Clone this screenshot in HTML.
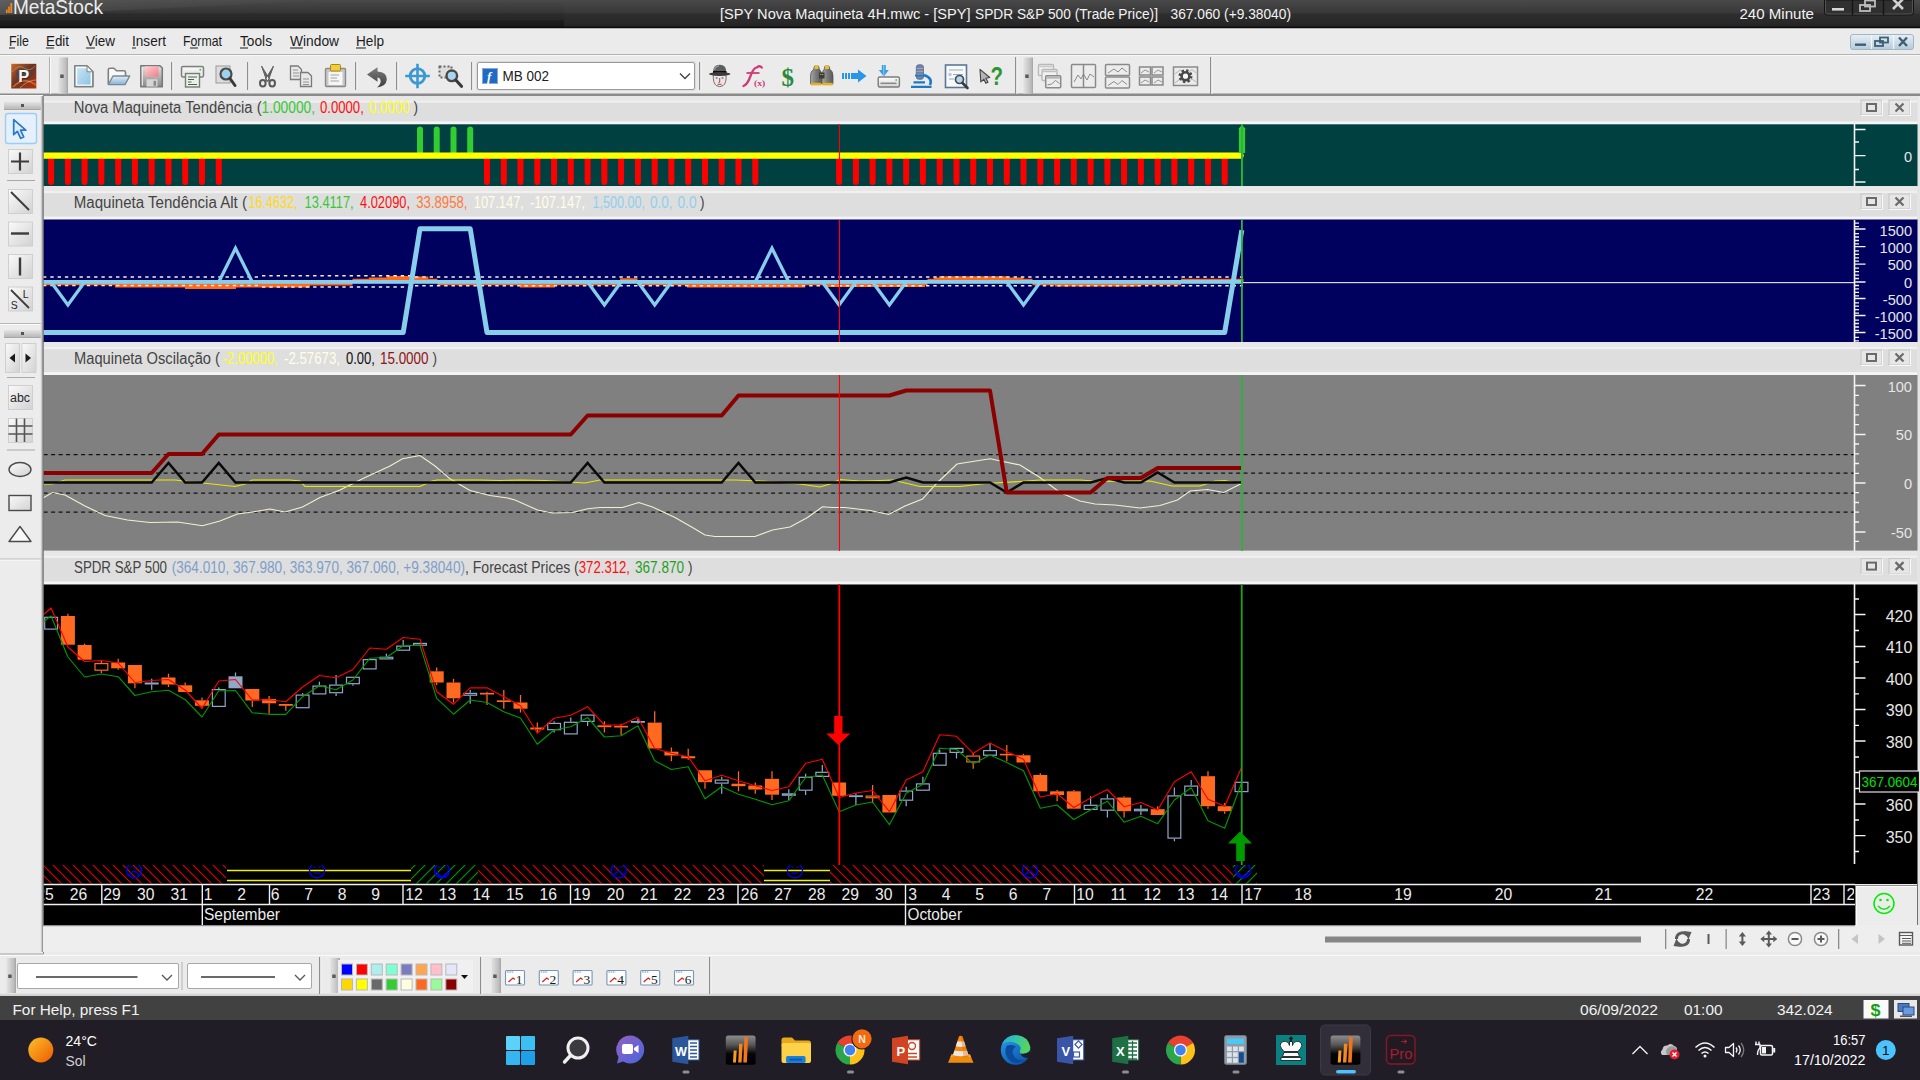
<!DOCTYPE html>
<html lang="en"><head><meta charset="utf-8"><title>MetaStock</title>
<style>html,body{margin:0;padding:0;background:#ebebeb;overflow:hidden}body{width:1920px;height:1080px;position:relative;font-family:"Liberation Sans", sans-serif}svg{position:absolute;left:0;top:0;display:block;font-family:"Liberation Sans", sans-serif}svg text{white-space:pre}</style></head><body>
<svg width="1920" height="1080" viewBox="0 0 1920 1080">
<defs>
<linearGradient id="gTitle" x1="0" y1="0" x2="0" y2="1"><stop offset="0" stop-color="#494949"/><stop offset="0.45" stop-color="#383838"/><stop offset="0.5" stop-color="#2e2e2e"/><stop offset="0.9" stop-color="#262626"/><stop offset="1" stop-color="#101010"/></linearGradient>
<linearGradient id="gTitleHi" x1="0" y1="0" x2="1" y2="0"><stop offset="0" stop-color="#909090" stop-opacity="0.30"/><stop offset="0.35" stop-color="#808080" stop-opacity="0.16"/><stop offset="1" stop-color="#808080" stop-opacity="0"/></linearGradient>
<linearGradient id="gTitleL" x1="0" y1="0" x2="0" y2="1"><stop offset="0" stop-color="#000" stop-opacity="0"/><stop offset="0.7" stop-color="#000" stop-opacity="0.08"/><stop offset="0.75" stop-color="#000" stop-opacity="0.3"/><stop offset="1" stop-color="#000" stop-opacity="0.3"/></linearGradient>
<linearGradient id="gGrip" x1="0" y1="0" x2="1" y2="0"><stop offset="0" stop-color="#e4e4e4"/><stop offset="1" stop-color="#b8b8b8"/></linearGradient>
<linearGradient id="gGripH" x1="0" y1="0" x2="0" y2="1"><stop offset="0" stop-color="#e4e4e4"/><stop offset="1" stop-color="#b8b8b8"/></linearGradient>
<linearGradient id="gBtn" x1="0" y1="0" x2="1" y2="1"><stop offset="0" stop-color="#fafafa"/><stop offset="1" stop-color="#d2d2d2"/></linearGradient>
<linearGradient id="gMdi" x1="0" y1="0" x2="0" y2="1"><stop offset="0" stop-color="#e6eff5"/><stop offset="0.5" stop-color="#cfdde8"/><stop offset="1" stop-color="#b4cbda"/></linearGradient>
<linearGradient id="gSun" x1="0" y1="0" x2="1" y2="1"><stop offset="0" stop-color="#fbc02a"/><stop offset="1" stop-color="#ee5a00"/></linearGradient>
<pattern id="hRed" width="10" height="10" patternUnits="userSpaceOnUse" patternTransform="translate(3 865)"><path d="M-2 -2L12 12M-12 -2L2 12M8 -2L22 12" stroke="#e80000" stroke-width="1.1"/></pattern>
<pattern id="hGreen" width="10" height="10" patternUnits="userSpaceOnUse" patternTransform="translate(5.100 865)"><path d="M-2 12L12 -2M-12 12L2 -2M8 12L22 -2" stroke="#00a000" stroke-width="1.1"/></pattern>
</defs>
<rect x="0" y="0" width="1920" height="1080" fill="#ebebeb"/>
<rect x="0" y="0" width="1920" height="28" fill="url(#gTitle)"/>
<rect x="0" y="0" width="564" height="28" fill="url(#gTitleL)"/>
<path d="M0 0H330L150 9Q60 13 0 15Z" fill="url(#gTitleHi)"/>
<rect x="0" y="27" width="1920" height="1.5" fill="#0a0a0a"/>
<path d="M6 13V9.5H7.6V13ZM8.2 13V6.5H9.8V13ZM10.4 13V3H12.2V13Z" fill="#f28a1c"/>
<text x="13" y="14" font-size="21" fill="#ececec" textLength="90" lengthAdjust="spacingAndGlyphs">MetaStock</text>
<text x="720" y="18.5" font-size="15.5" fill="#f2f2f2" textLength="250.6" lengthAdjust="spacingAndGlyphs">[SPY Nova Maquineta 4H.mwc - [SPY]</text>
<text x="975" y="18.5" font-size="15.5" fill="#f2f2f2" textLength="183" lengthAdjust="spacingAndGlyphs">SPDR S&amp;P 500 (Trade Price)]</text>
<text x="1170.5" y="18.5" font-size="15.5" fill="#f2f2f2" textLength="120.5" lengthAdjust="spacingAndGlyphs">367.060 (+9.38040)</text>
<text x="1739.5" y="18.5" font-size="15.5" fill="#f2f2f2" textLength="74.5" lengthAdjust="spacingAndGlyphs">240 Minute</text>
<path d="M1824.5 0V12Q1824.5 15 1828 15H1910Q1913.5 15 1913.5 12V0Z" fill="#303030" stroke="#141414" stroke-width="1"/>
<path d="M1825.5 0V12Q1825.5 14 1828 14H1910Q1912.5 14 1912.5 12V0" fill="none" stroke="#5a5a5a" stroke-width="0.8"/>
<path d="M1852.5 0V15M1883.5 0V15" stroke="#141414" stroke-width="1.4"/>
<rect x="1832" y="8" width="12" height="2.6" fill="#d8d8d8"/>
<rect x="1860" y="5" width="10" height="6" fill="none" stroke="#bdbdbd" stroke-width="1.8"/>
<rect x="1865" y="0.5" width="10" height="6" fill="none" stroke="#bdbdbd" stroke-width="1.8"/>
<path d="M1893 -1L1903 9M1903 -1L1893 9" stroke="#d0d0d0" stroke-width="2.6"/>
<rect x="0" y="28.5" width="1920" height="26" fill="#ebebeb"/>
<rect x="0" y="54" width="1920" height="1" fill="#b4b4b4"/>
<rect x="0" y="55" width="1920" height="1" fill="#f8f8f8"/>
<text x="9" y="46" font-size="15" fill="#1c1c1c" textLength="20" lengthAdjust="spacingAndGlyphs">File</text>
<rect x="9" y="47.5" width="6" height="1" fill="#1c1c1c"/>
<text x="46" y="46" font-size="15" fill="#1c1c1c" textLength="23" lengthAdjust="spacingAndGlyphs">Edit</text>
<rect x="46" y="47.5" width="8" height="1" fill="#1c1c1c"/>
<text x="86" y="46" font-size="15" fill="#1c1c1c" textLength="29" lengthAdjust="spacingAndGlyphs">View</text>
<rect x="86" y="47.5" width="9" height="1" fill="#1c1c1c"/>
<text x="132" y="46" font-size="15" fill="#1c1c1c" textLength="34" lengthAdjust="spacingAndGlyphs">Insert</text>
<rect x="132" y="47.5" width="4" height="1" fill="#1c1c1c"/>
<text x="183" y="46" font-size="15" fill="#1c1c1c" textLength="39" lengthAdjust="spacingAndGlyphs">Format</text>
<rect x="190" y="47.5" width="8" height="1" fill="#1c1c1c"/>
<text x="240" y="46" font-size="15" fill="#1c1c1c" textLength="32" lengthAdjust="spacingAndGlyphs">Tools</text>
<rect x="240" y="47.5" width="8" height="1" fill="#1c1c1c"/>
<text x="290" y="46" font-size="15" fill="#1c1c1c" textLength="49" lengthAdjust="spacingAndGlyphs">Window</text>
<rect x="290" y="47.5" width="13" height="1" fill="#1c1c1c"/>
<text x="356" y="46" font-size="15" fill="#1c1c1c" textLength="28" lengthAdjust="spacingAndGlyphs">Help</text>
<rect x="356" y="47.5" width="10" height="1" fill="#1c1c1c"/>
<rect x="1850.5" y="34.5" width="63" height="15" rx="2.5" fill="url(#gMdi)" stroke="#9fb7c6" stroke-width="1"/>
<path d="M1871.5 35V49M1893.5 35V49" stroke="#f2f7fa" stroke-width="1.2"/>
<rect x="1855" y="43.5" width="11" height="2.4" fill="#3e5f73"/>
<rect x="1875" y="41" width="8" height="5" fill="none" stroke="#3e5f73" stroke-width="1.8"/>
<rect x="1880" y="37.5" width="8" height="5" fill="none" stroke="#3e5f73" stroke-width="1.8"/>
<path d="M1899 37.5L1907 46M1907 37.5L1899 46" stroke="#3e5f73" stroke-width="2.4"/>
<rect x="0" y="56" width="1920" height="38" fill="#ebebeb"/>
<rect x="0" y="93.5" width="1920" height="1.5" fill="#8a8a8a"/>
<rect x="0" y="95" width="43" height="1" fill="#f6f6f6"/>
<linearGradient id="gP" x1="0" y1="0" x2="1" y2="1"><stop offset="0" stop-color="#c8682a"/><stop offset="0.45" stop-color="#6a3424"/><stop offset="1" stop-color="#b03410"/></linearGradient>
<rect x="11.300" y="63.800" width="25" height="24.700" fill="url(#gP)"/>
<ellipse cx="25" cy="73" rx="9.500" ry="5.500" fill="#4c4440" opacity="0.650"/><path d="M12 72Q18 64 24 68T35 66" stroke="#d8a070" stroke-width="1" fill="none" opacity="0.550"/><path d="M13 87Q24 76 36 85" stroke="#f07a2a" stroke-width="1.600" fill="none" opacity="0.700"/><path d="M20 88Q28 80 36 80" stroke="#e8d0c0" stroke-width="0.800" fill="none" opacity="0.600"/>
<text x="19" y="83" font-size="16.5" fill="#2a2220" font-weight="bold" opacity="0.6">P</text>
<text x="18.3" y="82.3" font-size="16.5" fill="#f6f6f6" font-weight="bold">P</text>
<rect x="49" y="57" width="1" height="37" fill="#b0b0b0"/><rect x="50" y="57" width="1" height="37" fill="#fafafa"/>
<rect x="58.3" y="57.5" width="8.400" height="36.0" fill="url(#gGrip)"/>
<rect x="66.7" y="57.5" width="1" height="36.0" fill="#8e8e8e"/>
<rect x="60.2" y="74.5" width="3.500" height="3.500" fill="#5a5a5a"/>
<linearGradient id="gDoc" x1="0" y1="0" x2="1" y2="1"><stop offset="0" stop-color="#cfe8f6"/><stop offset="1" stop-color="#86c0e2"/></linearGradient>
<path d="M74.800 65.800H87L93 71.800V86.800H74.800Z" fill="url(#gDoc)" stroke="#808080" stroke-width="1.600" stroke-linejoin="round"/><path d="M76.500 67.500H86.300L91.300 72.500V85.100H76.500Z" fill="none" stroke="#f6fafc" stroke-width="1.400"/><path d="M87 65.800V71.800H93Z" fill="#f4f4f4" stroke="#808080" stroke-width="1" stroke-linejoin="round"/>
<linearGradient id="gFold" x1="0" y1="0" x2="0" y2="1"><stop offset="0" stop-color="#e4eef6"/><stop offset="1" stop-color="#86b2d8"/></linearGradient>
<path d="M108.300 84.300V69.800Q108.300 68.300 110 68.300H114L116.500 70.800H124Q125.500 70.800 125.500 72.300V77" fill="#f8f8f8" stroke="#808080" stroke-width="1.600" stroke-linejoin="round"/><path d="M108.300 84.600L113 76H129.700L125 84.600Z" fill="url(#gFold)" stroke="#7a8894" stroke-width="1.400" stroke-linejoin="round"/>
<linearGradient id="gSave" x1="0" y1="0" x2="0" y2="1"><stop offset="0" stop-color="#e2e2e2"/><stop offset="0.5" stop-color="#b4b4b4"/><stop offset="1" stop-color="#8a8a8a"/></linearGradient><linearGradient id="gPink" x1="0" y1="0" x2="1" y2="1"><stop offset="0" stop-color="#fbd0d4"/><stop offset="1" stop-color="#f08088"/></linearGradient>
<path d="M140.800 65.800H160L162.300 68V86.800H140.800Z" fill="url(#gSave)" stroke="#787878" stroke-width="1.500" stroke-linejoin="round"/><rect x="145" y="66.300" width="13.500" height="10.200" fill="url(#gPink)"/><rect x="146.500" y="79.300" width="11" height="7.300" fill="#d6d6d6"/><rect x="153.500" y="80.800" width="2.600" height="5" fill="#8a8a8a"/><path d="M142.300 67.300V85.500" stroke="#f4f4f4" stroke-width="1"/>
<rect x="171" y="62" width="1.400" height="28" fill="#8e8e8e"/>
<rect x="172.4" y="62" width="1" height="28" fill="#f8f8f8"/>
<rect x="181.500" y="66.500" width="22" height="10.500" rx="1.500" fill="#ececec" stroke="#808080" stroke-width="1.500"/><path d="M183.500 69H201.500" stroke="#fafafa" stroke-width="1.500"/><rect x="185.500" y="73.500" width="14" height="13.500" fill="#e6f4e6" stroke="#7a7a7a" stroke-width="1.400"/><path d="M188 77H197M188 79.500H194M188 82H191.500M188 84.500H197" stroke="#5a5a5a" stroke-width="1"/><circle cx="200.300" cy="69.800" r="1" fill="#4c4"/>
<rect x="216" y="66" width="14" height="17" fill="#dcdcdc" stroke="#9a9a9a" stroke-width="1"/><circle cx="226" cy="74" r="5.5" fill="#9ed0f0" stroke="#4a4a4a" stroke-width="2.2"/><path d="M230 78.5L235 85.5" stroke="#3a3a3a" stroke-width="3" stroke-linecap="round"/>
<rect x="247" y="62" width="1.400" height="28" fill="#8e8e8e"/>
<rect x="248.4" y="62" width="1" height="28" fill="#f8f8f8"/>
<path d="M261.500 66L269.500 79L267 81.500ZM273.500 66L265.500 79L268 81.500Z" fill="#606060" stroke="#606060" stroke-width="1" stroke-linejoin="round"/><ellipse cx="262.800" cy="83.200" rx="2.800" ry="3.200" fill="none" stroke="#585858" stroke-width="2"/><ellipse cx="272.200" cy="83.200" rx="2.800" ry="3.200" fill="none" stroke="#585858" stroke-width="2"/>
<path d="M290.5 66H298L301.5 69.5V79.5H290.5Z" fill="#e8e8e8" stroke="#7a7a7a" stroke-width="1.3"/><path d="M300.5 72.5H308L311.5 76V86.5H300.5Z" fill="#e8e8e8" stroke="#7a7a7a" stroke-width="1.3"/><path d="M293 70H298M293 73H299M293 76H299M303 79H309M303 82H309M303 84.5H309" stroke="#8a8a8a" stroke-width="0.9"/>
<rect x="325.5" y="68.5" width="20" height="18" rx="1" fill="#c8c8c8" stroke="#8a8a8a" stroke-width="1.4"/><rect x="328.5" y="72" width="14" height="13" fill="#f6f6f6"/><rect x="330.5" y="64.5" width="10" height="6.5" rx="1" fill="#f2cc3a" stroke="#a88a10" stroke-width="1"/><path d="M330.5 75H339M330.5 78H337M330.5 81H339" stroke="#9a9a9a" stroke-width="0.9"/>
<rect x="355" y="62" width="1.400" height="28" fill="#8e8e8e"/>
<rect x="356.4" y="62" width="1" height="28" fill="#f8f8f8"/>
<linearGradient id="gUndo" x1="0" y1="0" x2="0" y2="1"><stop offset="0" stop-color="#7c7c7c"/><stop offset="1" stop-color="#3e3e3e"/></linearGradient>
<path d="M367 74.500L377.500 67.300V71.500Q387 72 386.800 79.500Q386.300 86.300 377 87.600Q381.200 84.300 380.600 80.600Q380 77.600 377.500 77.500V81.700Z" fill="url(#gUndo)"/>
<rect x="396" y="62" width="1.400" height="28" fill="#8e8e8e"/>
<rect x="397.4" y="62" width="1" height="28" fill="#f8f8f8"/>
<circle cx="417.500" cy="76" r="7.300" fill="#f2e8ee" stroke="#3a9ad0" stroke-width="2.800"/><path d="M417.500 63.800V88.300M405.200 76H429.800" stroke="#3a9ad0" stroke-width="2.600"/>
<rect x="439.500" y="66.400" width="12" height="11" fill="#dedede" stroke="#666" stroke-width="2" stroke-dasharray="2 2"/><circle cx="451.800" cy="75.800" r="5.300" fill="#a8d4f0" stroke="#484848" stroke-width="2.400"/><path d="M455.800 80L461.500 86.300" stroke="#3a3a3a" stroke-width="3.200" stroke-linecap="round"/>
<rect x="471" y="62" width="1.400" height="28" fill="#8e8e8e"/>
<rect x="472.4" y="62" width="1" height="28" fill="#f8f8f8"/>
<rect x="477.5" y="62.5" width="217" height="27" rx="1.5" fill="#ffffff" stroke="#9a9a9a" stroke-width="1"/>
<rect x="476.5" y="61.5" width="219" height="29" rx="2" fill="none" stroke="#dcdcdc" stroke-width="1"/>
<rect x="482.5" y="68.5" width="15" height="15" fill="#1e6ac8" stroke="#8aa8d0" stroke-width="1"/>
<text x="487" y="81" font-size="13" fill="#ffffff" font-style="italic" font-weight="bold" font-family="Liberation Serif, serif">f</text>
<text x="502.5" y="81" font-size="15" fill="#202020" textLength="46.5" lengthAdjust="spacingAndGlyphs">MB 002</text>
<path d="M680 73.5L685 78.5L690 73.5" stroke="#444" stroke-width="1.4" fill="none"/>
<rect x="699" y="62" width="1.400" height="28" fill="#8e8e8e"/>
<rect x="700.4" y="62" width="1" height="28" fill="#f8f8f8"/>
<path d="M713.300 75Q712.800 83 716.300 85.600Q719.700 87.700 723.100 85.600Q726.600 83 726.100 75Z" fill="#f6e0e0" stroke="#6e6262" stroke-width="0.900"/><circle cx="716.700" cy="78" r="1.100" fill="#5a9ad8"/><circle cx="722.500" cy="78" r="1.100" fill="#5a9ad8"/><path d="M719.700 78V82.300H718.500M717.500 84.300H721.500" stroke="#4a4040" stroke-width="0.800" fill="none"/><path d="M713 73Q712.800 64.800 719.700 64.800Q726.600 64.800 726.400 73Z" fill="#5e5e5e"/><path d="M714.500 70Q715 66.300 719 65.800" stroke="#9a9a9a" stroke-width="1.200" fill="none"/><rect x="713" y="71" width="13.400" height="2" fill="#0e0e0e"/><ellipse cx="719.700" cy="74" rx="10.700" ry="1.900" fill="#3c3c3c"/>
<path d="M743.500 86Q747.500 84.500 750.500 76T757 67.300Q759.800 65.200 761.800 67.600" stroke="#d03a78" stroke-width="2.300" fill="none" stroke-linecap="round"/><path d="M746.500 73H759.500" stroke="#d03a78" stroke-width="1.800"/>
<text x="754" y="85.5" font-size="9" fill="#d03a78" textLength="11.3" lengthAdjust="spacingAndGlyphs" font-weight="bold" font-family="Liberation Serif, serif">(x)</text>
<text x="781.5" y="86.3" font-size="26" fill="#2a8a3a" textLength="12.5" lengthAdjust="spacingAndGlyphs" font-weight="bold" font-family="Liberation Serif, serif">$</text>
<linearGradient id="gBin" x1="0" y1="0" x2="1" y2="0"><stop offset="0" stop-color="#a8a8a8"/><stop offset="0.5" stop-color="#7a7a7a"/><stop offset="1" stop-color="#5a5a5a"/></linearGradient>
<path d="M810.500 84V76Q810.500 71 813.500 69.500L814.500 66H818.500L819.500 69.500Q821.500 71 821.500 76V84Z" fill="url(#gBin)" stroke="#4a4a4a" stroke-width="0.700"/><path d="M833 84V76Q833 71 830 69.500L829 66H825L824 69.500Q822 71 822 76V84Z" fill="url(#gBin)" stroke="#4a4a4a" stroke-width="0.700"/><rect x="819" y="72.500" width="5.500" height="6" fill="#3c3c3c"/><rect x="820.300" y="74" width="1" height="1" fill="#e8c020"/><rect x="822.300" y="74" width="1" height="1" fill="#e8c020"/><rect x="814.500" y="65.500" width="4" height="3.500" fill="#e6c228"/><rect x="825" y="65.500" width="4" height="3.500" fill="#e6c228"/><rect x="810.800" y="82.800" width="10.400" height="2.600" fill="#e0b420"/><rect x="822.300" y="82.800" width="10.400" height="2.600" fill="#e0b420"/>
<path d="M842 73H844V79H842ZM845 73H847V79H845ZM848 73H850V79H848ZM851 73H858V69.5L866.5 76L858 82.5V79H851Z" fill="#2a96e8"/>
<linearGradient id="gTray" x1="0" y1="0" x2="0" y2="1"><stop offset="0" stop-color="#ffffff"/><stop offset="1" stop-color="#d4d4d4"/></linearGradient>
<rect x="878.200" y="77" width="21.200" height="10" rx="1.500" fill="url(#gTray)" stroke="#7c7c7c" stroke-width="1.400"/><path d="M880.500 83.300H896.500" stroke="#8a8a8a" stroke-width="1.600"/><circle cx="896.200" cy="80" r="1" fill="#5c5"/><path d="M881.800 65H885.800V70H888.800L883.800 76.500L878.800 70H881.800Z" fill="#3a9ee0"/><path d="M883.800 65V76" stroke="#8accf4" stroke-width="1"/>
<rect x="916.300" y="64.800" width="7.200" height="14.500" rx="2.500" fill="#7484a4" stroke="#566484" stroke-width="0.800"/><path d="M916.500 68.500H923.300M916.500 71.500H923.300M916.500 74.500H923.300" stroke="#9aa8c4" stroke-width="0.900"/><path d="M915 75.500H924.500" stroke="#1e78c8" stroke-width="1.800"/><path d="M924 75Q933 78 930 85" stroke="#1e78c8" stroke-width="2.600" fill="none"/><path d="M911 86.800H931.500M913.500 82.400H925" stroke="#1e78c8" stroke-width="2.200"/>
<rect x="945.5" y="65" width="21" height="22.5" fill="#f6f8fa" stroke="#5a7896" stroke-width="1.6"/><path d="M949 70H963M953 74.5H963M949 79H954" stroke="#9ab" stroke-width="1"/><rect x="948.5" y="73" width="3" height="3" fill="#b8c8d8"/><circle cx="959.5" cy="79.5" r="4" fill="#aed8f4" stroke="#4a4a4a" stroke-width="1.7"/><path d="M962.5 83L967.5 88" stroke="#3a3a3a" stroke-width="2.6" stroke-linecap="round"/>
<path d="M980 69.300L989.800 77.500L985.800 78.300L988 82.300L985.800 83.300L983.800 79.300L980.800 81.800Z" fill="#b4b4b4" stroke="#444" stroke-width="1.100" stroke-linejoin="round"/>
<text x="990.5" y="85.3" font-size="25" fill="#2e962e" textLength="12.5" lengthAdjust="spacingAndGlyphs" font-weight="bold">?</text>
<rect x="1015" y="57" width="1.400" height="37" fill="#8e8e8e"/>
<rect x="1016.4" y="57" width="1" height="37" fill="#f8f8f8"/>
<rect x="1023.3" y="57.5" width="8.400" height="36.0" fill="url(#gGrip)"/>
<rect x="1031.7" y="57.5" width="1" height="36.0" fill="#8e8e8e"/>
<rect x="1025.2" y="74.5" width="3.500" height="3.500" fill="#5a5a5a"/>
<rect x="1038.500" y="64.500" width="15" height="11" rx="1" stroke="#b8b8b8" stroke-width="1.400" fill="#f2f2f2"/><path d="M1039.500 66.500h13" stroke="#c8c8c8" stroke-width="1.500"/><rect x="1042" y="69.500" width="15" height="11" rx="1" stroke="#b8b8b8" stroke-width="1.400" fill="#f2f2f2"/><path d="M1043 71.500h13" stroke="#c0c0c0" stroke-width="1.500"/><rect x="1045.700" y="75.800" width="15" height="12" rx="1" stroke="#8a8a8a" stroke-width="1.5" fill="#ececec"/><path d="M1046.700 77.800h13" stroke="#b0b0b0" stroke-width="1.500"/><path d="M1047.500 85L1051.500 84L1055.500 80.500L1059.500 83.500" stroke="#8a8a8a" fill="none" stroke-width="1"/>
<rect x="1071.5" y="64.5" width="24" height="23" rx="1" stroke="#8a8a8a" stroke-width="1.5" fill="#ececec"/><path d="M1083.5 65V87" stroke="#8a8a8a" stroke-width="1.5"/><path d="M1074 82L1078 75L1081 79L1083.500 74L1087 80L1090 74L1094 77" stroke="#8a8a8a" fill="none" stroke-width="1"/>
<rect x="1105.500" y="64.5" width="24" height="11" rx="1" stroke="#8a8a8a" stroke-width="1.5" fill="#ececec"/><rect x="1105.5" y="77" width="24" height="11" rx="1" stroke="#8a8a8a" stroke-width="1.5" fill="#ececec"/><path d="M1108 73L1114 69L1118 72L1122 68L1127 72M1108 85.5L1114 81.5L1118 84.5L1122 80.5L1127 84.5" stroke="#8a8a8a" fill="none" stroke-width="1"/>
<rect x="1139.500" y="67" width="11" height="8" stroke="#8a8a8a" stroke-width="1.5" fill="#ececec"/><rect x="1152" y="67" width="11" height="8" stroke="#8a8a8a" stroke-width="1.5" fill="#ececec"/><rect x="1139.5" y="77" width="11" height="8" stroke="#8a8a8a" stroke-width="1.5" fill="#ececec"/><rect x="1152" y="77" width="11" height="8" stroke="#8a8a8a" stroke-width="1.5" fill="#ececec"/><path d="M1141 73L1145 70L1149 72M1154 73L1158 70L1162 72M1141 83L1145 80L1149 82M1154 83L1158 80L1162 82" stroke="#8a8a8a" fill="none" stroke-width="0.9"/>
<rect x="1173.500" y="67" width="24" height="18.500" stroke="#8a8a8a" stroke-width="1.5" fill="#ececec"/><path d="M1175 74L1180 70L1184 73M1187 73L1192 69.500L1196 73M1175 83L1180 79L1183 81.500M1188 82L1192 79L1196 82" stroke="#c4c4c4" fill="none" stroke-width="1.200"/><circle cx="1185.500" cy="76.200" r="5.300" fill="none" stroke="#484848" stroke-width="3.400" stroke-dasharray="2.080 2.080"/><circle cx="1185.500" cy="76.200" r="3.900" fill="#fafafa" stroke="#484848" stroke-width="2.600"/>
<rect x="1210" y="57" width="1.400" height="37" fill="#8e8e8e"/>
<rect x="1211.4" y="57" width="1" height="37" fill="#f8f8f8"/>
<rect x="0" y="96" width="42" height="858" fill="#ececec"/>
<rect x="4" y="102" width="37" height="7" fill="url(#gGripH)"/><rect x="4" y="109" width="37" height="1" fill="#a8a8a8"/><rect x="21" y="104" width="3" height="3" fill="#555"/>
<rect x="5.5" y="113.5" width="31" height="30" rx="2.5" fill="#e4f0fb" stroke="#9ccdf6" stroke-width="1.4"/>
<path d="M13.700 119.700V134.700L17.400 131.300L20.700 138.300L23.700 136.900L20.500 130.200H25.800Z" fill="#dcecfb" stroke="#2a78cc" stroke-width="1.700" stroke-linejoin="round"/>
<rect x="8.5" y="149.5" width="24" height="24" fill="url(#gBtn)" stroke="#cfcfcf" stroke-width="1"/>
<path d="M20 152.500V170.500M11 161.500H29" stroke="#3c3c3c" stroke-width="2.2"/>
<rect x="7" y="180" width="28" height="1" fill="#a8a8a8"/>
<rect x="8.5" y="189.5" width="24" height="24" fill="url(#gBtn)" stroke="#cfcfcf" stroke-width="1"/>
<path d="M11 192L29 210" stroke="#3c3c3c" stroke-width="2"/>
<rect x="8.5" y="222.0" width="24" height="24" fill="url(#gBtn)" stroke="#cfcfcf" stroke-width="1"/>
<path d="M11 233.500H29" stroke="#3c3c3c" stroke-width="2.4"/>
<rect x="8.5" y="254.5" width="24" height="24" fill="url(#gBtn)" stroke="#cfcfcf" stroke-width="1"/>
<path d="M20 257.500V275.500" stroke="#3c3c3c" stroke-width="2.4"/>
<rect x="8.5" y="287.0" width="24" height="24" fill="url(#gBtn)" stroke="#cfcfcf" stroke-width="1"/>
<path d="M11 290L29 308" stroke="#3c3c3c" stroke-width="1.8"/>
<text x="10.8" y="308.7" font-size="10.5" fill="#2a2a2a">S</text>
<text x="22.8" y="298.3" font-size="10.5" fill="#2a2a2a">L</text>
<rect x="0" y="323" width="42" height="1" fill="#b8b8b8"/><rect x="0" y="324" width="42" height="1" fill="#fafafa"/>
<rect x="4" y="330" width="37" height="7" fill="url(#gGripH)"/><rect x="4" y="337" width="37" height="1" fill="#a8a8a8"/><rect x="21" y="332" width="3" height="3" fill="#555"/>
<rect x="5.5" y="343.5" width="14" height="29" fill="url(#gBtn)" stroke="#cfcfcf" stroke-width="1"/>
<rect x="22.0" y="343.5" width="14" height="29" fill="url(#gBtn)" stroke="#cfcfcf" stroke-width="1"/>
<path d="M15 353.500V362.500L9.500 358Z" fill="#1a1a1a"/><path d="M25.500 353.500V362.500L31 358Z" fill="#1a1a1a"/>
<rect x="7" y="377" width="28" height="1" fill="#a8a8a8"/>
<rect x="8.5" y="385.5" width="24" height="24" fill="url(#gBtn)" stroke="#cfcfcf" stroke-width="1"/>
<text x="10" y="402" font-size="12.5" fill="#2a2a2a" textLength="20" lengthAdjust="spacingAndGlyphs">abc</text>
<rect x="8.5" y="418.5" width="24" height="24" fill="url(#gBtn)" stroke="#cfcfcf" stroke-width="1"/>
<path d="M8.500 426H32.500M8.500 434H32.500M16.500 418.500V442M24.500 418.500V442" stroke="#555" stroke-width="1.6"/>
<rect x="7" y="449.500" width="28" height="1" fill="#a8a8a8"/>
<ellipse cx="20" cy="469.500" rx="11" ry="7" fill="url(#gBtn)" stroke="#4a4a4a" stroke-width="1.4"/>
<rect x="9" y="495.500" width="22" height="15" fill="url(#gBtn)" stroke="#4a4a4a" stroke-width="1.4"/>
<path d="M20 526.500L31 541.500H9Z" fill="#fafafa" stroke="#4a4a4a" stroke-width="1.4" stroke-linejoin="round"/>
<rect x="0" y="558.600" width="42" height="1" fill="#b0b0b0"/><rect x="0" y="559.600" width="42" height="1" fill="#fafafa"/>
<rect x="43" y="95.5" width="1874.500" height="28.799999999999997" fill="#dedede"/>
<rect x="43" y="95.5" width="1874.500" height="5" fill="#e7e7e7"/>
<rect x="43" y="100.5" width="1874.500" height="2.200" fill="#f0f0f0"/>
<rect x="43" y="121.39999999999999" width="1874.500" height="2.900" fill="#f4f4f4"/>
<text x="73.75" y="112.5" font-size="16" fill="#444444" textLength="187.8" lengthAdjust="spacingAndGlyphs">Nova Maquineta Tendência (</text>
<text x="261.5" y="112.5" font-size="16" fill="#35c935" textLength="53.5" lengthAdjust="spacingAndGlyphs">1.00000,</text>
<text x="320" y="112.5" font-size="16" fill="#ff0f0f" textLength="43.8" lengthAdjust="spacingAndGlyphs">0.0000,</text>
<text x="368.75" y="112.5" font-size="16" fill="#ffff20" textLength="40.8" lengthAdjust="spacingAndGlyphs">0.0000</text>
<text x="413.5" y="112.5" font-size="16" fill="#444444" textLength="4.5" lengthAdjust="spacingAndGlyphs">)</text>
<rect x="1861" y="100" width="21" height="15" fill="#e6e6e6" stroke="#c4c4c4" stroke-width="1"/>
<path d="M1861 115.5H1882.5V100" stroke="#f8f8f8" stroke-width="1" fill="none"/>
<rect x="1867" y="104" width="9" height="7" fill="none" stroke="#6a6a6a" stroke-width="2"/>
<rect x="1889" y="100" width="21" height="15" fill="#e6e6e6" stroke="#c4c4c4" stroke-width="1"/>
<path d="M1889 115.5H1910.5V100" stroke="#f8f8f8" stroke-width="1" fill="none"/>
<path d="M1895.5 103.5L1903.5 111.5M1903.5 103.5L1895.5 111.5" stroke="#6a6a6a" stroke-width="2.2"/>
<rect x="43" y="95" width="1877" height="1" fill="#8a8a8a"/>
<rect x="43" y="186" width="1874.500" height="33.5" fill="#dedede"/>
<rect x="43" y="186" width="1874.500" height="5" fill="#e7e7e7"/>
<rect x="43" y="191" width="1874.500" height="2.200" fill="#f0f0f0"/>
<rect x="43" y="216.6" width="1874.500" height="2.900" fill="#f4f4f4"/>
<text x="73.75" y="207.5" font-size="16" fill="#444444" textLength="173.2" lengthAdjust="spacingAndGlyphs">Maquineta Tendência Alt (</text>
<text x="248.5" y="207.5" font-size="16" fill="#ffd820" textLength="49.0" lengthAdjust="spacingAndGlyphs">16.4632,</text>
<text x="304.5" y="207.5" font-size="16" fill="#35c935" textLength="49.2" lengthAdjust="spacingAndGlyphs">13.4117,</text>
<text x="360" y="207.5" font-size="16" fill="#ff0f0f" textLength="50" lengthAdjust="spacingAndGlyphs">4.02090,</text>
<text x="416.25" y="207.5" font-size="16" fill="#ff7a3a" textLength="51.2" lengthAdjust="spacingAndGlyphs">33.8958,</text>
<text x="473.75" y="207.5" font-size="16" fill="#ffffe6" textLength="50.2" lengthAdjust="spacingAndGlyphs">107.147,</text>
<text x="530" y="207.5" font-size="16" fill="#ffffe6" textLength="55" lengthAdjust="spacingAndGlyphs">-107.147,</text>
<text x="592.5" y="207.5" font-size="16" fill="#8fd0ec" textLength="52.5" lengthAdjust="spacingAndGlyphs">1,500.00,</text>
<text x="650" y="207.5" font-size="16" fill="#8fd0ec" textLength="22.5" lengthAdjust="spacingAndGlyphs">0.0,</text>
<text x="677.5" y="207.5" font-size="16" fill="#8fd0ec" textLength="19.0" lengthAdjust="spacingAndGlyphs">0.0</text>
<text x="700" y="207.5" font-size="16" fill="#444444" textLength="4.5" lengthAdjust="spacingAndGlyphs">)</text>
<rect x="1861" y="194" width="21" height="15" fill="#e6e6e6" stroke="#c4c4c4" stroke-width="1"/>
<path d="M1861 209.5H1882.5V194" stroke="#f8f8f8" stroke-width="1" fill="none"/>
<rect x="1867" y="198" width="9" height="7" fill="none" stroke="#6a6a6a" stroke-width="2"/>
<rect x="1889" y="194" width="21" height="15" fill="#e6e6e6" stroke="#c4c4c4" stroke-width="1"/>
<path d="M1889 209.5H1910.5V194" stroke="#f8f8f8" stroke-width="1" fill="none"/>
<path d="M1895.5 197.5L1903.5 205.5M1903.5 197.5L1895.5 205.5" stroke="#6a6a6a" stroke-width="2.2"/>
<rect x="43" y="342" width="1874.500" height="33" fill="#dedede"/>
<rect x="43" y="342" width="1874.500" height="5" fill="#e7e7e7"/>
<rect x="43" y="347" width="1874.500" height="2.200" fill="#f0f0f0"/>
<rect x="43" y="372.1" width="1874.500" height="2.900" fill="#f4f4f4"/>
<text x="74" y="363.5" font-size="16" fill="#444444" textLength="146" lengthAdjust="spacingAndGlyphs">Maquineta Oscilação (</text>
<text x="222.5" y="363.5" font-size="16" fill="#ffff20" textLength="55.0" lengthAdjust="spacingAndGlyphs">-2.00000,</text>
<text x="284" y="363.5" font-size="16" fill="#ffffe6" textLength="56" lengthAdjust="spacingAndGlyphs">-2.57673,</text>
<text x="346" y="363.5" font-size="16" fill="#101010" textLength="29" lengthAdjust="spacingAndGlyphs">0.00,</text>
<text x="380" y="363.5" font-size="16" fill="#8b1414" textLength="48.5" lengthAdjust="spacingAndGlyphs">15.0000</text>
<text x="432.5" y="363.5" font-size="16" fill="#444444" textLength="4.5" lengthAdjust="spacingAndGlyphs">)</text>
<rect x="1861" y="350" width="21" height="15" fill="#e6e6e6" stroke="#c4c4c4" stroke-width="1"/>
<path d="M1861 365.5H1882.5V350" stroke="#f8f8f8" stroke-width="1" fill="none"/>
<rect x="1867" y="354" width="9" height="7" fill="none" stroke="#6a6a6a" stroke-width="2"/>
<rect x="1889" y="350" width="21" height="15" fill="#e6e6e6" stroke="#c4c4c4" stroke-width="1"/>
<path d="M1889 365.5H1910.5V350" stroke="#f8f8f8" stroke-width="1" fill="none"/>
<path d="M1895.5 353.5L1903.5 361.5M1903.5 353.5L1895.5 361.5" stroke="#6a6a6a" stroke-width="2.2"/>
<rect x="43" y="550.6" width="1874.500" height="33.89999999999998" fill="#dedede"/>
<rect x="43" y="550.6" width="1874.500" height="5" fill="#e7e7e7"/>
<rect x="43" y="555.6" width="1874.500" height="2.200" fill="#f0f0f0"/>
<rect x="43" y="581.6" width="1874.500" height="2.900" fill="#f4f4f4"/>
<text x="74" y="572.5" font-size="16" fill="#444444" textLength="93" lengthAdjust="spacingAndGlyphs">SPDR S&amp;P 500</text>
<text x="171.7" y="572.5" font-size="16" fill="#7f9fc8" textLength="293.3" lengthAdjust="spacingAndGlyphs">(364.010, 367.980, 363.970, 367.060, +9.38040)</text>
<text x="465" y="572.5" font-size="16" fill="#444444" textLength="113.8" lengthAdjust="spacingAndGlyphs">, Forecast Prices (</text>
<text x="578.8" y="572.5" font-size="16" fill="#ff0f0f" textLength="51.2" lengthAdjust="spacingAndGlyphs">372.312,</text>
<text x="635" y="572.5" font-size="16" fill="#1ea01e" textLength="49" lengthAdjust="spacingAndGlyphs">367.870</text>
<text x="688" y="572.5" font-size="16" fill="#444444" textLength="4.5" lengthAdjust="spacingAndGlyphs">)</text>
<rect x="1861" y="558.6" width="21" height="15" fill="#e6e6e6" stroke="#c4c4c4" stroke-width="1"/>
<path d="M1861 574.1H1882.5V558.6" stroke="#f8f8f8" stroke-width="1" fill="none"/>
<rect x="1867" y="562.6" width="9" height="7" fill="none" stroke="#6a6a6a" stroke-width="2"/>
<rect x="1889" y="558.6" width="21" height="15" fill="#e6e6e6" stroke="#c4c4c4" stroke-width="1"/>
<path d="M1889 574.1H1910.5V558.6" stroke="#f8f8f8" stroke-width="1" fill="none"/>
<path d="M1895.5 562.1L1903.5 570.1M1903.5 562.1L1895.5 570.1" stroke="#6a6a6a" stroke-width="2.2"/>
<rect x="1917" y="124" width="3" height="802" fill="#e4e4e4"/>
<rect x="43" y="124.300" width="1874.500" height="61.700" fill="#004040"/>
<path d="M51.1 158V182M67.9 158V182M84.6 158V182M101.4 158V182M118.2 158V182M134.9 158V182M151.7 158V182M168.5 158V182M185.2 158V182M202.0 158V182M218.8 158V182M487.0 158V182M503.8 158V182M520.5 158V182M537.3 158V182M554.1 158V182M570.8 158V182M587.6 158V182M604.4 158V182M621.1 158V182M637.9 158V182M654.7 158V182M671.4 158V182M688.2 158V182M705.0 158V182M721.7 158V182M738.5 158V182M755.3 158V182M839.1 158V182M855.9 158V182M872.6 158V182M889.4 158V182M906.2 158V182M922.9 158V182M939.7 158V182M956.5 158V182M973.2 158V182M990.0 158V182M1006.8 158V182M1023.5 158V182M1040.3 158V182M1057.1 158V182M1073.8 158V182M1090.6 158V182M1107.4 158V182M1124.1 158V182M1140.9 158V182M1157.7 158V182M1174.4 158V182M1191.2 158V182M1208.0 158V182M1224.7 158V182" stroke="#ff0000" stroke-width="6" stroke-linecap="round" fill="none"/>
<path d="M420.0 154V129.5M436.7 154V129.5M453.5 154V129.5M470.2 154V129.5" stroke="#32cd32" stroke-width="6" stroke-linecap="round" fill="none"/>
<path d="M43 152.500H1242.500Q1245 155.600 1242.500 158.700H43Z" fill="#ffff00"/>
<rect x="838.900" y="124" width="1.100" height="36" fill="#ff0000"/>
<path d="M1238.900 153V128.300L1242 125L1245.100 128.300V153Z" fill="#32cd32"/>
<rect x="1241" y="124" width="1.900" height="62" fill="#2cb43a"/>
<rect x="1853.7" y="124" width="1.6" height="62" fill="#f4f4f4"/>
<path d="M1854.5 129.5h11M1854.5 155.7h11M1854.5 182h11M1854.5 142h4.5M1854.5 169.5h4.5" stroke="#f4f4f4" stroke-width="1.3" fill="none"/>
<text x="1912" y="161.6" font-size="14.6" fill="#e6e6e6" text-anchor="end">0</text>
<rect x="43" y="219.500" width="1874.500" height="122.500" fill="#00005f"/>
<path d="M352.5 278.8H368.8V282H352.5ZM368.8 277.5H386.7V282H368.8ZM386.7 276H415V282H386.7ZM415 276.5H428.3V282H415ZM428.3 278.8H437.5V282H428.3ZM620 278.2H637.5V282H620ZM927.5 278.8H933.8V282H927.5ZM933.8 277.5H939V282H933.8ZM939 276.3H1007.5V282H939ZM1007.5 277.5H1023.3V282H1007.5ZM1023.3 278.8H1032.5V282H1023.3ZM1181 278.8H1243.5V282H1181ZM43 282H115V285.2H43ZM115 282H185V287.4H115ZM185 282H236V288.9H185ZM236 282H310V287.4H236ZM310 282H352.5V285.4H310ZM437.5 282H520V285.2H437.5ZM520 282H555V287.5H520ZM555 282H620V285.2H555ZM637.5 282H687V285.2H637.5ZM687 282H805V287.5H687ZM805 282H825V285.3H805ZM825 282H925V287H825ZM925 282H927.5V285.2H925ZM1032.5 282H1055V285.2H1032.5ZM1055 282H1140V286.6H1055ZM1140 282H1181V285.2H1140Z" fill="#ff6a20"/>
<path d="M43 276.9H258M262 275.7H410M415 277.1H1243M43 285.6H258M262 286.9H405M415 285.7H1243" stroke="#f4f0dc" stroke-width="1.500" stroke-dasharray="3.400 3.900" fill="none"/>
<rect x="43" y="280" width="1200" height="3.800" fill="#87ceeb"/>
<path d="M51.1 282L67.9 305L84.6 282M218.8 282L235.5 248.3L252.3 282M587.6 282L604.4 305L621.1 282M637.9 282L654.7 305L671.4 282M755.3 282L772.0 248.3L788.8 282M822.3 282L839.1 305L855.9 282M872.6 282L889.4 305L906.2 282M1006.8 282L1023.5 305L1040.3 282" stroke="#87ceeb" stroke-width="3.300" fill="none" stroke-linejoin="miter"/>
<polyline points="43,332.5 403.2,332.5 420.0,228.7 470.2,228.7 487.0,332.5 1224.7,332.5 1241.8,230.2" stroke="#87ceeb" stroke-width="5" fill="none" stroke-linejoin="round"/>
<rect x="1243" y="282" width="611" height="1.2" fill="#d8d8e4"/>
<rect x="838.900" y="220" width="1.100" height="122" fill="#ff0000"/>
<rect x="1241" y="220" width="1.800" height="122" fill="#2cb43a"/>
<rect x="1853.7" y="220" width="1.6" height="122" fill="#f4f4f4"/>
<path d="M1854.5 229h11M1854.5 246.7h11M1854.5 264.2h11M1854.5 282h11M1854.5 298.5h11M1854.5 315.5h11M1854.5 332.5h11M1854.5 340.8h4.5M1854.5 337.4h4.5M1854.5 330.4h4.5M1854.5 327.0h4.5M1854.5 323.5h4.5M1854.5 320.1h4.5M1854.5 313.1h4.5M1854.5 309.7h4.5M1854.5 306.2h4.5M1854.5 302.8h4.5M1854.5 295.8h4.5M1854.5 292.4h4.5M1854.5 288.9h4.5M1854.5 285.5h4.5M1854.5 278.5h4.5M1854.5 275.1h4.5M1854.5 271.6h4.5M1854.5 268.2h4.5M1854.5 261.2h4.5M1854.5 257.8h4.5M1854.5 254.3h4.5M1854.5 250.9h4.5M1854.5 243.9h4.5M1854.5 240.5h4.5M1854.5 237.0h4.5M1854.5 233.6h4.5M1854.5 226.6h4.5M1854.5 223.2h4.5" stroke="#f4f4f4" stroke-width="1.3" fill="none"/>
<text x="1912" y="236.1" font-size="14.6" fill="#e6e6e6" text-anchor="end">1500</text>
<text x="1912" y="253.1" font-size="14.6" fill="#e6e6e6" text-anchor="end">1000</text>
<text x="1912" y="270.1" font-size="14.6" fill="#e6e6e6" text-anchor="end">500</text>
<text x="1912" y="287.6" font-size="14.6" fill="#e6e6e6" text-anchor="end">0</text>
<text x="1912" y="304.6" font-size="14.6" fill="#e6e6e6" text-anchor="end">-500</text>
<text x="1912" y="322.1" font-size="14.6" fill="#e6e6e6" text-anchor="end">-1000</text>
<text x="1912" y="339.1" font-size="14.6" fill="#e6e6e6" text-anchor="end">-1500</text>
<rect x="43" y="375" width="1874.500" height="175.600" fill="#808080"/>
<path d="M43.600 454.500H1854M43.600 473H1854M43.600 493H1854M43.600 512H1854" stroke="#101010" stroke-width="1.250" stroke-dasharray="4 3.500" fill="none"/>
<polyline points="43,498 52.5,492.5 65,495 85,506 105,515.5 127.5,520 150,522.5 177.5,522 202.5,525.8 220,521 237.5,514 252.5,512 270,509 285,512 302.5,507 320,497.5 340,490 362.5,478.8 390,466 402.5,458.8 420,455.5 435,466 450,478.8 470,490.5 490,495.5 507.5,498 515,500 537.5,510 552.5,513 572.5,512.5 587.5,508.8 600,507.5 622.5,507.5 638.8,502.5 652.5,507 675,517.5 692.5,527.5 705,535 715,536.5 755,536.5 772.5,530 790,527 807.5,517.5 822.5,506.8 832.5,507.5 845,507.5 870,510.5 888.8,514.5 905,506 922.5,499 937,483 957,464 990,458.8 1020,465 1040,477.5 1060,492.5 1080,501 1095,504 1115,505 1140,508 1160,505.5 1177.5,500 1190,491 1207.5,489.5 1223.8,492.5 1241,483.8" stroke="#f0f0d0" stroke-width="1.1" fill="none"/>
<polyline points="43,484 52,484 65,480 175,480 235,486.5 245,484 252,480 290,480 300,481 305,486.5 420,486.5 432,481 437,480 480,480 500,480.5 520,480 545,480.5 585,483 600,480 735,480 760,481 800,484 820,487 830,484 840,479.5 860,481 880,480.5 893,480 905,483 920,486.5 960,486.5 985,483.5 1020,481.5 1040,480 1080,480 1100,481.5 1150,481 1172,486 1200,486 1215,481 1225,480.5 1241,484" stroke="#e8e800" stroke-width="1.15" fill="none"/>
<polyline points="43,482.5 151.7,482.5 168.5,463 185.2,482.5 202.0,482.5 218.8,463 235.5,482.5 570.8,482.5 587.6,463 604.4,482.5 721.7,482.5 738.5,463 755.3,482.5 889.4,482.5 906.2,477.5 922.9,482.5 990.0,482.5 1006.8,492.5 1023.5,482.5 1090.6,482.5 1107.4,478 1124.1,482.5 1140.9,482.5 1157.7,472.5 1174.4,482.5 1241,482.5" stroke="#0a0a0a" stroke-width="2.450" fill="none"/>
<polyline points="43,473 151.7,473 168.5,454 202.0,454 218.8,434.5 570.8,434.5 587.6,415.5 721.7,415.5 738.5,395.5 889.4,395.5 906.2,390.5 990.0,390.5 1006.8,492.5 1090.6,492.5 1107.4,478 1140.9,478 1157.7,468 1242,468" stroke="#8b0000" stroke-width="4" fill="none" stroke-linejoin="round"/>
<rect x="838.900" y="375" width="1.100" height="176" fill="#ff0000"/>
<rect x="1241" y="375" width="1.800" height="176" fill="#2cb43a"/>
<rect x="1853.7" y="375" width="1.6" height="176" fill="#f4f4f4"/>
<path d="M1854.5 385.5h11M1854.5 434.5h11M1854.5 483h11M1854.5 532h11M1854.5 541.4h4.5M1854.5 522.0h4.5M1854.5 512.2h4.5M1854.5 502.5h4.5M1854.5 492.7h4.5M1854.5 473.3h4.5M1854.5 463.5h4.5M1854.5 453.8h4.5M1854.5 444.0h4.5M1854.5 424.6h4.5M1854.5 414.8h4.5M1854.5 405.1h4.5M1854.5 395.3h4.5" stroke="#f4f4f4" stroke-width="1.3" fill="none"/>
<text x="1912" y="391.6" font-size="14.6" fill="#e6e6e6" text-anchor="end">100</text>
<text x="1912" y="440.40000000000003" font-size="14.6" fill="#e6e6e6" text-anchor="end">50</text>
<text x="1912" y="489.1" font-size="14.6" fill="#e6e6e6" text-anchor="end">0</text>
<text x="1912" y="537.6" font-size="14.6" fill="#e6e6e6" text-anchor="end">-50</text>
<rect x="43" y="584.500" width="1874.500" height="340.500" fill="#000000"/>
<clipPath id="cpP"><rect x="43" y="584" width="1812" height="300"/></clipPath>
<g clip-path="url(#cpP)">
<path d="M51.1 616V616.7M51.1 629.7V630" stroke="#8fa8c8" stroke-width="1.25" fill="none"/>
<rect x="44.7" y="617.3000000000001" width="12.8" height="11.8" fill="#000" stroke="#8fa8c8" stroke-width="1.2"/>
<path d="M67.9 613.7V616M67.9 644.7V644.7" stroke="#ff6a20" stroke-width="1.25" fill="none"/>
<rect x="60.900000000000006" y="616" width="14" height="28.7" fill="#ff6a20"/>
<path d="M84.6 643.7V645M84.6 659.7V659.7" stroke="#ff6a20" stroke-width="1.25" fill="none"/>
<rect x="77.6" y="645" width="14" height="14.7" fill="#ff6a20"/>
<path d="M101.4 660.8V663M101.4 670.8V673" stroke="#ff6a20" stroke-width="1.25" fill="none"/>
<rect x="95.0" y="663.6" width="12.8" height="6.6" fill="#000" stroke="#ff6a20" stroke-width="1.2"/>
<path d="M118.2 658.7V662.5M118.2 668.3V669.7" stroke="#ff6a20" stroke-width="1.25" fill="none"/>
<rect x="111.2" y="662.5" width="14" height="5.8" fill="#ff6a20"/>
<path d="M134.9 665V665M134.9 683.3V688.3" stroke="#ff6a20" stroke-width="1.25" fill="none"/>
<rect x="127.9" y="665" width="14" height="18.3" fill="#ff6a20"/>
<path d="M151.7 678.8V682.5M151.7 684.5V689.7" stroke="#8fa8c8" stroke-width="1.25" fill="none"/>
<rect x="145.29999999999998" y="683.1" width="12.8" height="0.8" fill="#000" stroke="#8fa8c8" stroke-width="1.2"/>
<path d="M168.5 673.7V677.5M168.5 684.5V687" stroke="#ff6a20" stroke-width="1.25" fill="none"/>
<rect x="161.5" y="677.5" width="14" height="7.0" fill="#ff6a20"/>
<path d="M185.2 682.5V685.3M185.2 692V692" stroke="#ff6a20" stroke-width="1.25" fill="none"/>
<rect x="178.2" y="685.3" width="14" height="6.7" fill="#ff6a20"/>
<path d="M202.0 697.5V700.3M202.0 705.8V708.3" stroke="#ff6a20" stroke-width="1.25" fill="none"/>
<rect x="195.0" y="700.3" width="14" height="5.5" fill="#ff6a20"/>
<path d="M218.8 687.5V689M218.8 707V707" stroke="#8fa8c8" stroke-width="1.25" fill="none"/>
<rect x="212.4" y="689.6" width="12.8" height="16.8" fill="#000" stroke="#8fa8c8" stroke-width="1.2"/>
<path d="M235.5 672.5V676.3M235.5 688.3V688.3" stroke="#8fa8c8" stroke-width="1.25" fill="none"/>
<rect x="228.5" y="676.3" width="14" height="12.0" fill="#8fa8c8"/>
<path d="M252.3 689V689M252.3 700.5V707" stroke="#ff6a20" stroke-width="1.25" fill="none"/>
<rect x="245.3" y="689" width="14" height="11.5" fill="#ff6a20"/>
<path d="M269.1 696V699M269.1 703.3V713.7" stroke="#ff6a20" stroke-width="1.25" fill="none"/>
<rect x="262.1" y="699" width="14" height="4.3" fill="#ff6a20"/>
<path d="M285.8 704V704M285.8 705.8V710.8" stroke="#ff6a20" stroke-width="1.25" fill="none"/>
<rect x="278.8" y="704" width="14" height="1.8" fill="#ff6a20"/>
<path d="M302.6 693V694.5M302.6 708.3V708.3" stroke="#8fa8c8" stroke-width="1.25" fill="none"/>
<rect x="296.20000000000005" y="695.1" width="12.8" height="12.6" fill="#000" stroke="#8fa8c8" stroke-width="1.2"/>
<path d="M319.4 681.7V685.5M319.4 694.5V694.5" stroke="#8fa8c8" stroke-width="1.25" fill="none"/>
<rect x="313.0" y="686.1" width="12.8" height="7.8" fill="#000" stroke="#8fa8c8" stroke-width="1.2"/>
<path d="M336.1 675V684.5M336.1 693.3V696" stroke="#8fa8c8" stroke-width="1.25" fill="none"/>
<rect x="329.70000000000005" y="685.1" width="12.8" height="7.6" fill="#000" stroke="#8fa8c8" stroke-width="1.2"/>
<path d="M352.9 676.7V676.7M352.9 684.3V685.8" stroke="#8fa8c8" stroke-width="1.25" fill="none"/>
<rect x="346.5" y="677.3000000000001" width="12.8" height="6.4" fill="#000" stroke="#8fa8c8" stroke-width="1.2"/>
<rect x="363.3" y="659.6" width="12.8" height="9.3" fill="#000" stroke="#8fa8c8" stroke-width="1.2"/>
<path d="M386.4 653.7V656.7M386.4 659.5V659.5" stroke="#8fa8c8" stroke-width="1.25" fill="none"/>
<rect x="380.0" y="657.3000000000001" width="12.8" height="1.6" fill="#000" stroke="#8fa8c8" stroke-width="1.2"/>
<path d="M403.2 640V645.5M403.2 650.8V650.8" stroke="#8fa8c8" stroke-width="1.25" fill="none"/>
<rect x="396.8" y="646.1" width="12.8" height="4.1" fill="#000" stroke="#8fa8c8" stroke-width="1.2"/>
<rect x="413.6" y="643.4" width="12.8" height="1.8" fill="#000" stroke="#8fa8c8" stroke-width="1.2"/>
<path d="M436.7 667.5V671.3M436.7 682.5V685" stroke="#ff6a20" stroke-width="1.25" fill="none"/>
<rect x="429.7" y="671.3" width="14" height="11.2" fill="#ff6a20"/>
<path d="M453.5 678.7V682.5M453.5 698.3V702.5" stroke="#ff6a20" stroke-width="1.25" fill="none"/>
<rect x="446.5" y="682.5" width="14" height="15.8" fill="#ff6a20"/>
<path d="M470.2 690V692.8M470.2 695.8V703.7" stroke="#8fa8c8" stroke-width="1.25" fill="none"/>
<rect x="463.8" y="693.4" width="12.8" height="1.8" fill="#000" stroke="#8fa8c8" stroke-width="1.2"/>
<path d="M487.0 691.7V692.8M487.0 694.5V705" stroke="#ff6a20" stroke-width="1.25" fill="none"/>
<rect x="480.0" y="692.8" width="14" height="1.7" fill="#ff6a20"/>
<path d="M503.8 690V700.3M503.8 702V708.7" stroke="#ff6a20" stroke-width="1.25" fill="none"/>
<rect x="496.8" y="700.3" width="14" height="1.7" fill="#ff6a20"/>
<path d="M520.5 695V702.5M520.5 708.7V712.5" stroke="#ff6a20" stroke-width="1.25" fill="none"/>
<rect x="513.5" y="702.5" width="14" height="6.2" fill="#ff6a20"/>
<path d="M537.3 722.5V727.5M537.3 729.5V733.3" stroke="#ff6a20" stroke-width="1.25" fill="none"/>
<rect x="530.3" y="727.5" width="14" height="2.0" fill="#ff6a20"/>
<path d="M554.1 721.3V722.8M554.1 730.3V732.5" stroke="#8fa8c8" stroke-width="1.25" fill="none"/>
<rect x="547.7" y="723.4" width="12.8" height="6.3" fill="#000" stroke="#8fa8c8" stroke-width="1.2"/>
<path d="M570.8 717.5V721.7M570.8 734.5V734.5" stroke="#8fa8c8" stroke-width="1.25" fill="none"/>
<rect x="564.4" y="722.3000000000001" width="12.8" height="11.6" fill="#000" stroke="#8fa8c8" stroke-width="1.2"/>
<path d="M587.6 714.5V714.5M587.6 722V726" stroke="#8fa8c8" stroke-width="1.25" fill="none"/>
<rect x="581.2" y="715.1" width="12.8" height="6.3" fill="#000" stroke="#8fa8c8" stroke-width="1.2"/>
<path d="M604.4 721.3V725.3M604.4 727.2V732.5" stroke="#ff6a20" stroke-width="1.25" fill="none"/>
<rect x="597.4" y="725.3" width="14" height="1.9" fill="#ff6a20"/>
<path d="M621.1 723.8V725.8M621.1 727.5V735" stroke="#ff6a20" stroke-width="1.25" fill="none"/>
<rect x="614.1" y="725.8" width="14" height="1.7" fill="#ff6a20"/>
<path d="M637.9 719V721M637.9 722.5V723.8" stroke="#8fa8c8" stroke-width="1.25" fill="none"/>
<rect x="631.5" y="721.6" width="12.8" height="0.6" fill="#000" stroke="#8fa8c8" stroke-width="1.2"/>
<path d="M654.7 711.2V722.6M654.7 748.5V748.5" stroke="#ff6a20" stroke-width="1.25" fill="none"/>
<rect x="647.7" y="722.6" width="14" height="25.9" fill="#ff6a20"/>
<path d="M671.4 747.5V751.7M671.4 755.5V761.3" stroke="#ff6a20" stroke-width="1.25" fill="none"/>
<rect x="664.4" y="751.7" width="14" height="3.8" fill="#ff6a20"/>
<path d="M688.2 748.7V756.2M688.2 758.3V759.7" stroke="#ff6a20" stroke-width="1.25" fill="none"/>
<rect x="681.2" y="756.2" width="14" height="2.1" fill="#ff6a20"/>
<path d="M705.0 770.3V770.3M705.0 782.2V788.7" stroke="#ff6a20" stroke-width="1.25" fill="none"/>
<rect x="698.0" y="770.3" width="14" height="11.9" fill="#ff6a20"/>
<path d="M721.7 776.7V779.5M721.7 783.7V793.8" stroke="#8fa8c8" stroke-width="1.25" fill="none"/>
<rect x="715.3000000000001" y="780.1" width="12.8" height="3.0" fill="#000" stroke="#8fa8c8" stroke-width="1.2"/>
<path d="M738.5 771.3V783.7M738.5 786.2V791.2" stroke="#ff6a20" stroke-width="1.25" fill="none"/>
<rect x="731.5" y="783.7" width="14" height="2.5" fill="#ff6a20"/>
<path d="M755.3 782.5V785.5M755.3 789.5V793.8" stroke="#ff6a20" stroke-width="1.25" fill="none"/>
<rect x="748.3" y="785.5" width="14" height="4.0" fill="#ff6a20"/>
<path d="M772.0 771.3V778.8M772.0 794.7V800" stroke="#ff6a20" stroke-width="1.25" fill="none"/>
<rect x="765.0" y="778.8" width="14" height="15.9" fill="#ff6a20"/>
<path d="M788.8 789.2V793.3M788.8 795.8V800" stroke="#8fa8c8" stroke-width="1.25" fill="none"/>
<rect x="782.4" y="793.9" width="12.8" height="1.3" fill="#000" stroke="#8fa8c8" stroke-width="1.2"/>
<path d="M805.6 773.8V776.7M805.6 790.8V795" stroke="#8fa8c8" stroke-width="1.25" fill="none"/>
<rect x="799.2" y="777.3000000000001" width="12.8" height="12.9" fill="#000" stroke="#8fa8c8" stroke-width="1.2"/>
<path d="M822.3 765V771.7M822.3 777V777" stroke="#8fa8c8" stroke-width="1.25" fill="none"/>
<rect x="815.9" y="772.3000000000001" width="12.8" height="4.1" fill="#000" stroke="#8fa8c8" stroke-width="1.2"/>
<rect x="832.1" y="782.5" width="14" height="13.3" fill="#ff6a20"/>
<path d="M855.9 793.3V795.3M855.9 797V805" stroke="#8fa8c8" stroke-width="1.25" fill="none"/>
<rect x="849.5" y="795.9" width="12.8" height="0.6" fill="#000" stroke="#8fa8c8" stroke-width="1.2"/>
<path d="M872.6 785V795.5M872.6 798.3V803.3" stroke="#ff6a20" stroke-width="1.25" fill="none"/>
<rect x="866.2" y="796.1" width="12.8" height="1.6" fill="#000" stroke="#ff6a20" stroke-width="1.2"/>
<rect x="882.4" y="795" width="14" height="17.5" fill="#ff6a20"/>
<path d="M906.2 786.7V790.5M906.2 800.8V806.2" stroke="#8fa8c8" stroke-width="1.25" fill="none"/>
<rect x="899.8000000000001" y="791.1" width="12.8" height="9.1" fill="#000" stroke="#8fa8c8" stroke-width="1.2"/>
<path d="M922.9 776.7V783.3M922.9 790.8V790.8" stroke="#8fa8c8" stroke-width="1.25" fill="none"/>
<rect x="916.5" y="783.9" width="12.8" height="6.3" fill="#000" stroke="#8fa8c8" stroke-width="1.2"/>
<path d="M939.7 750V752.7M939.7 765.8V765.8" stroke="#8fa8c8" stroke-width="1.25" fill="none"/>
<rect x="933.3000000000001" y="753.3000000000001" width="12.8" height="11.9" fill="#000" stroke="#8fa8c8" stroke-width="1.2"/>
<path d="M956.5 747.8V747.8M956.5 753V758.5" stroke="#8fa8c8" stroke-width="1.25" fill="none"/>
<rect x="950.1" y="748.4" width="12.8" height="4.0" fill="#000" stroke="#8fa8c8" stroke-width="1.2"/>
<path d="M973.2 753V755.5M973.2 762.5V768.7" stroke="#ff6a20" stroke-width="1.25" fill="none"/>
<rect x="966.8000000000001" y="756.1" width="12.8" height="5.8" fill="#000" stroke="#ff6a20" stroke-width="1.2"/>
<path d="M990.0 743V750M990.0 755.8V755.8" stroke="#8fa8c8" stroke-width="1.25" fill="none"/>
<rect x="983.6" y="750.6" width="12.8" height="4.6" fill="#000" stroke="#8fa8c8" stroke-width="1.2"/>
<path d="M1006.8 745V753.8M1006.8 754.9V761.2" stroke="#ff6a20" stroke-width="1.25" fill="none"/>
<rect x="999.8" y="753.8" width="14" height="1.6" fill="#ff6a20"/>
<path d="M1023.5 753.8V755.3M1023.5 762.5V762.5" stroke="#ff6a20" stroke-width="1.25" fill="none"/>
<rect x="1016.5" y="755.3" width="14" height="7.2" fill="#ff6a20"/>
<path d="M1040.3 773.3V775M1040.3 791.3V791.3" stroke="#ff6a20" stroke-width="1.25" fill="none"/>
<rect x="1033.3" y="775" width="14" height="16.3" fill="#ff6a20"/>
<path d="M1057.1 790V791.3M1057.1 795V801.2" stroke="#ff6a20" stroke-width="1.25" fill="none"/>
<rect x="1050.1" y="791.3" width="14" height="3.7" fill="#ff6a20"/>
<path d="M1073.8 790V791.3M1073.8 808.7V808.7" stroke="#ff6a20" stroke-width="1.25" fill="none"/>
<rect x="1066.8" y="791.3" width="14" height="17.4" fill="#ff6a20"/>
<path d="M1090.6 796.3V804.7M1090.6 810V810" stroke="#8fa8c8" stroke-width="1.25" fill="none"/>
<rect x="1084.1999999999998" y="805.3000000000001" width="12.8" height="4.1" fill="#000" stroke="#8fa8c8" stroke-width="1.2"/>
<path d="M1107.4 794.2V798.3M1107.4 810.8V817.5" stroke="#8fa8c8" stroke-width="1.25" fill="none"/>
<rect x="1101.0" y="798.9" width="12.8" height="11.3" fill="#000" stroke="#8fa8c8" stroke-width="1.2"/>
<path d="M1124.1 796.2V797.5M1124.1 811.2V817.5" stroke="#ff6a20" stroke-width="1.25" fill="none"/>
<rect x="1117.1" y="797.5" width="14" height="13.7" fill="#ff6a20"/>
<path d="M1140.9 805V808.7M1140.9 811.3V815" stroke="#8fa8c8" stroke-width="1.25" fill="none"/>
<rect x="1134.5" y="809.3000000000001" width="12.8" height="1.4" fill="#000" stroke="#8fa8c8" stroke-width="1.2"/>
<path d="M1157.7 806.2V809.2M1157.7 815V815" stroke="#ff6a20" stroke-width="1.25" fill="none"/>
<rect x="1150.7" y="809.2" width="14" height="5.8" fill="#ff6a20"/>
<path d="M1174.4 787.5V795.3M1174.4 838.7V841.3" stroke="#8fa8c8" stroke-width="1.25" fill="none"/>
<rect x="1168.0" y="795.9" width="12.8" height="42.2" fill="#000" stroke="#8fa8c8" stroke-width="1.2"/>
<path d="M1191.2 780V785.5M1191.2 795.8V795.8" stroke="#8fa8c8" stroke-width="1.25" fill="none"/>
<rect x="1184.8" y="786.1" width="12.8" height="9.1" fill="#000" stroke="#8fa8c8" stroke-width="1.2"/>
<path d="M1208.0 771.2V776.2M1208.0 806.2V808.7" stroke="#ff6a20" stroke-width="1.25" fill="none"/>
<rect x="1201.0" y="776.2" width="14" height="30.0" fill="#ff6a20"/>
<path d="M1224.7 803V806.2M1224.7 811.2V813.8" stroke="#ff6a20" stroke-width="1.25" fill="none"/>
<rect x="1217.7" y="806.2" width="14" height="5.0" fill="#ff6a20"/>
<rect x="1235.1" y="782.3000000000001" width="12.8" height="9.3" fill="#000" stroke="#8fa8c8" stroke-width="1.2"/>
<polyline points="43,622 51.1,616 67.9,657 84.6,677 101.4,674 118.2,676.7 134.9,695.5 151.7,691.7 168.5,690.3 185.2,699.7 202.0,717 218.8,690.8 235.5,690.5 252.3,712.8 269.1,714.3 285.8,714.3 302.6,696.7 319.4,685.8 336.1,689.7 352.9,680 369.7,658.3 386.4,657.5 403.2,645.8 420.0,645.3 436.7,698.3 453.5,714.2 470.2,700 487.0,702.5 503.8,711.7 520.5,718 537.3,744.2 554.1,730 570.8,726.7 587.6,717.5 604.4,737 621.1,735.8 637.9,725.8 654.7,760.8 671.4,769.5 688.2,766.7 705.0,798.7 721.7,786.7 738.5,794.2 755.3,799.2 772.0,804.7 788.8,800.8 805.6,777.5 822.3,775 839.1,811.7 855.9,805 872.6,802 889.4,824.7 906.2,793.3 922.9,784.2 939.7,748.3 956.5,749.5 973.2,763.8 990.0,755 1006.8,762.5 1023.5,770.8 1040.3,808.3 1057.1,805 1073.8,819.5 1090.6,810 1107.4,801.2 1124.1,822.2 1140.9,816.3 1157.7,823.7 1174.4,800 1191.2,787.8 1208.0,820.8 1224.7,828.3 1241.5,783.3" stroke="#009800" stroke-width="1.15" fill="none" stroke-linejoin="round"/>
<polyline points="43,615 51.1,608 67.9,647 84.6,661.5 101.4,660.5 118.2,663 134.9,682.5 151.7,680.5 168.5,679.5 185.2,690 202.0,708.5 218.8,681 235.5,679.5 252.3,700 269.1,699.7 285.8,701.7 302.6,687 319.4,675.5 336.1,677.8 352.9,669.5 369.7,648 386.4,649.2 403.2,637.5 420.0,639.2 436.7,691.7 453.5,704.2 470.2,687.8 487.0,687.8 503.8,696.7 520.5,705.8 537.3,733 554.1,718.3 570.8,715.3 587.6,706.7 604.4,725 621.1,725 637.9,717.2 654.7,748.5 671.4,753.3 688.2,756.7 705.0,780.8 721.7,775.3 738.5,780.8 755.3,785.8 772.0,790.5 788.8,786.7 805.6,763.3 822.3,759.2 839.1,797.5 855.9,793 872.6,790.5 889.4,811.7 906.2,780 922.9,771.7 939.7,734.7 956.5,736.3 973.2,753.3 990.0,743 1006.8,751.7 1023.5,759.2 1040.3,797 1057.1,793.8 1073.8,807.5 1090.6,798 1107.4,789.5 1124.1,806.7 1140.9,802.5 1157.7,810 1174.4,781.7 1191.2,771.7 1208.0,799.2 1224.7,806.3 1241.5,767.5" stroke="#ff0000" stroke-width="1.15" fill="none" stroke-linejoin="round"/>
<rect x="838.4" y="584" width="1.8" height="281" fill="#ff0000"/>
<path d="M834.200 716H842.500V733.500H850.300L838.300 745L826.300 733.500H834.200Z" fill="#ff0000"/>
<rect x="1240.800" y="584" width="1.800" height="281" fill="#22a022"/>
<path d="M1240 831.500L1252 843.500H1244.800V861H1236.200V843.500H1228Z" fill="#009a00"/>
<rect x="43" y="865" width="183" height="18.5" fill="url(#hRed)"/>
<rect x="411" y="865" width="67" height="18.5" fill="url(#hGreen)"/>
<rect x="478" y="865" width="286" height="18.5" fill="url(#hRed)"/>
<rect x="830" y="865" width="403" height="18.5" fill="url(#hRed)"/>
<rect x="1233" y="865" width="24" height="18.5" fill="url(#hGreen)"/>
<path d="M227 870.500H411M227 880.500H411M764 870.500H830M764 880.500H830" stroke="#f0f000" stroke-width="1.4"/>
<clipPath id="cpS"><rect x="43" y="865" width="1812" height="19"/></clipPath><g clip-path="url(#cpS)">
<circle cx="134" cy="870.5" r="7.5" fill="none" stroke="#0000e0" stroke-width="1.350"/>
<path d="M130.6 867.2h1.6M135.8 867.2h1.6" stroke="#0000e0" stroke-width="1.350"/>
<path d="M129 875.5Q134 867.5 139 875.5" fill="none" stroke="#0000e0" stroke-width="1.350"/>
<circle cx="317" cy="870.5" r="7.5" fill="none" stroke="#0000e0" stroke-width="1.350"/>
<path d="M313.6 867.2h1.6M318.8 867.2h1.6" stroke="#0000e0" stroke-width="1.350"/>
<path d="M313.5 873.0H320.5" stroke="#0000e0" stroke-width="1.350"/>
<circle cx="442" cy="870.5" r="7.5" fill="none" stroke="#0000e0" stroke-width="1.350"/>
<path d="M438.6 867.2h1.6M443.8 867.2h1.6" stroke="#0000e0" stroke-width="1.350"/>
<path d="M436.5 872.0Q442 881.0 447.5 872.0" fill="none" stroke="#0000e0" stroke-width="1.500"/>
<circle cx="618.8" cy="870.5" r="7.5" fill="none" stroke="#0000e0" stroke-width="1.350"/>
<path d="M615.4 867.2h1.6M620.5999999999999 867.2h1.6" stroke="#0000e0" stroke-width="1.350"/>
<path d="M613.8 875.5Q618.8 867.5 623.8 875.5" fill="none" stroke="#0000e0" stroke-width="1.350"/>
<circle cx="795" cy="870.5" r="7.5" fill="none" stroke="#0000e0" stroke-width="1.350"/>
<path d="M791.6 867.2h1.6M796.8 867.2h1.6" stroke="#0000e0" stroke-width="1.350"/>
<path d="M791.5 873.0H798.5" stroke="#0000e0" stroke-width="1.350"/>
<circle cx="1030" cy="870.5" r="7.5" fill="none" stroke="#0000e0" stroke-width="1.350"/>
<path d="M1026.6 867.2h1.6M1031.8 867.2h1.6" stroke="#0000e0" stroke-width="1.350"/>
<path d="M1025 875.5Q1030 867.5 1035 875.5" fill="none" stroke="#0000e0" stroke-width="1.350"/>
<circle cx="1243" cy="870.5" r="7.5" fill="none" stroke="#0000e0" stroke-width="1.350"/>
<path d="M1239.6 867.2h1.6M1244.8 867.2h1.6" stroke="#0000e0" stroke-width="1.350"/>
<path d="M1237.5 872.0Q1243 881.0 1248.5 872.0" fill="none" stroke="#0000e0" stroke-width="1.500"/>
</g>
</g>
<rect x="1853.700" y="584" width="1.600" height="280" fill="#f4f4f4"/>
<path d="M1854.5 614.5h11M1854.5 646.5h11M1854.5 678h11M1854.5 709.5h11M1854.5 741h11M1854.5 772.5h11M1854.5 804h11M1854.5 835.7h11M1854.5 599h4.5M1854.5 630.5h4.5M1854.5 662h4.5M1854.5 693.8h4.5M1854.5 725.3h4.5M1854.5 757h4.5M1854.5 788.5h4.5M1854.5 820h4.5M1854.5 851.5h4.5" stroke="#f4f4f4" stroke-width="1.3" fill="none"/>
<text x="1912.5" y="621.6" font-size="16.2" fill="#e6e6e6" text-anchor="end" textLength="26.8" lengthAdjust="spacingAndGlyphs">420</text>
<text x="1912.5" y="653.4" font-size="16.2" fill="#e6e6e6" text-anchor="end" textLength="26.8" lengthAdjust="spacingAndGlyphs">410</text>
<text x="1912.5" y="684.9" font-size="16.2" fill="#e6e6e6" text-anchor="end" textLength="26.8" lengthAdjust="spacingAndGlyphs">400</text>
<text x="1912.5" y="716.4" font-size="16.2" fill="#e6e6e6" text-anchor="end" textLength="26.8" lengthAdjust="spacingAndGlyphs">390</text>
<text x="1912.5" y="747.9" font-size="16.2" fill="#e6e6e6" text-anchor="end" textLength="26.8" lengthAdjust="spacingAndGlyphs">380</text>
<text x="1912.5" y="811.2" font-size="16.2" fill="#e6e6e6" text-anchor="end" textLength="26.8" lengthAdjust="spacingAndGlyphs">360</text>
<text x="1912.5" y="842.8000000000001" font-size="16.2" fill="#e6e6e6" text-anchor="end" textLength="26.8" lengthAdjust="spacingAndGlyphs">350</text>
<rect x="1859.500" y="771" width="60" height="21" fill="#000" stroke="#e0e0e0" stroke-width="1.2"/>
<text x="1861.5" y="787" font-size="14.5" fill="#00e000" textLength="56" lengthAdjust="spacingAndGlyphs">367.0604</text>
<path d="M43 884.500H1855M43 904.500H1855" stroke="#f0f0f0" stroke-width="1.4"/>
<path d="M101.8 884V904M202.3 884V904M269.5 884V904M403 884V904M570.5 884V904M738 884V904M905.5 884V904M1074.5 884V904M1242 884V904M1811 884V904M1844 884V904M202.300 904V925M905.500 904V925" stroke="#f0f0f0" stroke-width="1.4"/>
<clipPath id="cpX"><rect x="44" y="885" width="1810" height="40"/></clipPath><g clip-path="url(#cpX)">
<text x="45.0" y="900.1" font-size="15.7" fill="#ececec" text-anchor="middle">25</text>
<text x="78.6" y="900.1" font-size="15.7" fill="#ececec" text-anchor="middle">26</text>
<text x="112.1" y="900.1" font-size="15.7" fill="#ececec" text-anchor="middle">29</text>
<text x="145.7" y="900.1" font-size="15.7" fill="#ececec" text-anchor="middle">30</text>
<text x="179.2" y="900.1" font-size="15.7" fill="#ececec" text-anchor="middle">31</text>
<text x="208.0" y="900.1" font-size="15.7" fill="#ececec" text-anchor="middle">1</text>
<text x="241.5" y="900.1" font-size="15.7" fill="#ececec" text-anchor="middle">2</text>
<text x="275.1" y="900.1" font-size="15.7" fill="#ececec" text-anchor="middle">6</text>
<text x="308.6" y="900.1" font-size="15.7" fill="#ececec" text-anchor="middle">7</text>
<text x="342.2" y="900.1" font-size="15.7" fill="#ececec" text-anchor="middle">8</text>
<text x="375.7" y="900.1" font-size="15.7" fill="#ececec" text-anchor="middle">9</text>
<text x="414.1" y="900.1" font-size="15.7" fill="#ececec" text-anchor="middle">12</text>
<text x="447.6" y="900.1" font-size="15.7" fill="#ececec" text-anchor="middle">13</text>
<text x="481.2" y="900.1" font-size="15.7" fill="#ececec" text-anchor="middle">14</text>
<text x="514.8" y="900.1" font-size="15.7" fill="#ececec" text-anchor="middle">15</text>
<text x="548.3" y="900.1" font-size="15.7" fill="#ececec" text-anchor="middle">16</text>
<text x="581.8" y="900.1" font-size="15.7" fill="#ececec" text-anchor="middle">19</text>
<text x="615.4" y="900.1" font-size="15.7" fill="#ececec" text-anchor="middle">20</text>
<text x="648.9" y="900.1" font-size="15.7" fill="#ececec" text-anchor="middle">21</text>
<text x="682.5" y="900.1" font-size="15.7" fill="#ececec" text-anchor="middle">22</text>
<text x="716.0" y="900.1" font-size="15.7" fill="#ececec" text-anchor="middle">23</text>
<text x="749.6" y="900.1" font-size="15.7" fill="#ececec" text-anchor="middle">26</text>
<text x="783.1" y="900.1" font-size="15.7" fill="#ececec" text-anchor="middle">27</text>
<text x="816.7" y="900.1" font-size="15.7" fill="#ececec" text-anchor="middle">28</text>
<text x="850.2" y="900.1" font-size="15.7" fill="#ececec" text-anchor="middle">29</text>
<text x="883.8" y="900.1" font-size="15.7" fill="#ececec" text-anchor="middle">30</text>
<text x="912.5" y="900.1" font-size="15.7" fill="#ececec" text-anchor="middle">3</text>
<text x="946.1" y="900.1" font-size="15.7" fill="#ececec" text-anchor="middle">4</text>
<text x="979.6" y="900.1" font-size="15.7" fill="#ececec" text-anchor="middle">5</text>
<text x="1013.2" y="900.1" font-size="15.7" fill="#ececec" text-anchor="middle">6</text>
<text x="1046.8" y="900.1" font-size="15.7" fill="#ececec" text-anchor="middle">7</text>
<text x="1085.1" y="900.1" font-size="15.7" fill="#ececec" text-anchor="middle">10</text>
<text x="1118.6" y="900.1" font-size="15.7" fill="#ececec" text-anchor="middle">11</text>
<text x="1152.2" y="900.1" font-size="15.7" fill="#ececec" text-anchor="middle">12</text>
<text x="1185.7" y="900.1" font-size="15.7" fill="#ececec" text-anchor="middle">13</text>
<text x="1219.3" y="900.1" font-size="15.7" fill="#ececec" text-anchor="middle">14</text>
<text x="1253" y="900.1" font-size="15.7" fill="#ececec" text-anchor="middle">17</text>
<text x="1303" y="900.1" font-size="15.7" fill="#ececec" text-anchor="middle">18</text>
<text x="1403" y="900.1" font-size="15.7" fill="#ececec" text-anchor="middle">19</text>
<text x="1503.4" y="900.1" font-size="15.7" fill="#ececec" text-anchor="middle">20</text>
<text x="1603.5" y="900.1" font-size="15.7" fill="#ececec" text-anchor="middle">21</text>
<text x="1704.6" y="900.1" font-size="15.7" fill="#ececec" text-anchor="middle">22</text>
<text x="1821.5" y="900.1" font-size="15.7" fill="#ececec" text-anchor="middle">23</text>
<text x="1855.3" y="900.1" font-size="15.7" fill="#ececec" text-anchor="middle">24</text>
<text x="204" y="919.9" font-size="15.7" fill="#ececec" textLength="76" lengthAdjust="spacingAndGlyphs">September</text>
<text x="907.5" y="919.9" font-size="15.7" fill="#ececec" textLength="54.5" lengthAdjust="spacingAndGlyphs">October</text>
</g>
<rect x="1855" y="884" width="62" height="41" fill="#ececec"/>
<path d="M1855.500 925V885.500H1917" stroke="#8a8a8a" stroke-width="1" fill="none"/><path d="M1856.500 925V886.500H1917" stroke="#fdfdfd" stroke-width="1" fill="none"/>
<circle cx="1884" cy="903.500" r="10" fill="none" stroke="#00ee00" stroke-width="1.5"/><circle cx="1880.500" cy="900" r="1.300" fill="#00ee00"/><circle cx="1887.500" cy="900" r="1.300" fill="#00ee00"/><path d="M1878 906Q1884 912.500 1890 906" fill="none" stroke="#00ee00" stroke-width="1.5"/>
<rect x="40.800" y="96" width="1" height="858" fill="#d8d8d8"/>
<rect x="41.600" y="96" width="1" height="858" fill="#b0b0b0"/>
<rect x="42.400" y="96" width="1.400" height="858" fill="#787878"/>
<rect x="43" y="925" width="1877" height="28" fill="#eeeeee"/>
<rect x="43" y="925" width="1812" height="1.2" fill="#8e8e8e"/>
<rect x="1325" y="936.5" width="316" height="6" fill="#868686"/>
<rect x="1665" y="929" width="1.3" height="20" fill="#8a8a8a"/>
<rect x="1725.5" y="929" width="1.3" height="20" fill="#8a8a8a"/>
<rect x="1838" y="929" width="1.3" height="20" fill="#8a8a8a"/>
<path d="M1676.500 939A6 6 0 0 1 1687.500 935.500M1688.500 939A6 6 0 0 1 1677.500 942.500" stroke="#5a5a5a" stroke-width="3" fill="none"/><path d="M1684 931L1691.500 932L1688.500 939.500ZM1681 947L1673.500 946L1676.500 938.500Z" fill="#5a5a5a"/>
<rect x="1707.500" y="934" width="2" height="10" fill="#5a5a5a"/>
<path d="M1742.400 932L1746 936.500H1743.400V941.500H1746L1742.400 946L1738.800 941.500H1741.400V936.500H1738.800Z" fill="#5a5a5a"/>
<path d="M1768.800 930.500L1772 934.500H1769.800V938H1773.300V935.800L1777.300 939L1773.300 942.200V940H1769.800V943.500H1772L1768.800 947.500L1765.600 943.500H1767.800V940H1764.300V942.200L1760.300 939L1764.300 935.800V938H1767.800V934.500H1765.600Z" fill="#5a5a5a"/>
<circle cx="1795" cy="939" r="6.600" fill="#fafafa" stroke="#8a8a8a" stroke-width="1.500"/><rect x="1791.500" y="938" width="7" height="2" fill="#5a5a5a"/>
<circle cx="1821" cy="939" r="6.600" fill="#fafafa" stroke="#8a8a8a" stroke-width="1.500"/><rect x="1817.500" y="938" width="7" height="2" fill="#5a5a5a"/><rect x="1820" y="935.500" width="2" height="7" fill="#5a5a5a"/>
<path d="M1858 934V944L1851.500 939Z" fill="#c4c4c4"/><path d="M1878.500 934V944L1885 939Z" fill="#c4c4c4"/>
<rect x="1899.500" y="932.500" width="13" height="12.500" fill="#f6f6f6" stroke="#5a5a5a" stroke-width="1.400"/><path d="M1900 935.500H1912M1902 938.500H1911M1902 941H1911M1902 943.300H1911" stroke="#5a5a5a" stroke-width="1"/>
<rect x="0" y="954" width="43.500" height="1.200" fill="#b0b0b0"/>
<rect x="0" y="952" width="1920" height="4" fill="#ebebeb"/>
<rect x="0" y="953.500" width="43.500" height="1" fill="#a8a8a8"/>
<rect x="43" y="952" width="1" height="2" fill="#8a8a8a"/>
<rect x="0" y="955" width="1920" height="1" fill="#fafafa"/>
<rect x="0" y="956" width="1920" height="39" fill="#ebebeb"/>
<rect x="0" y="993.800" width="1920" height="1" fill="#c8c8c8"/><rect x="0" y="994.800" width="1920" height="1" fill="#fafafa"/>
<rect x="6.3" y="958" width="8.400" height="35" fill="url(#gGrip)"/>
<rect x="14.7" y="958" width="1" height="35" fill="#8e8e8e"/>
<rect x="8.2" y="974.5" width="3.500" height="3.500" fill="#5a5a5a"/>
<rect x="17.5" y="963.500" width="161" height="25" rx="1.500" fill="#fff" stroke="#a8a8a8" stroke-width="1"/>
<rect x="36" y="976.300" width="101.5" height="1.400" fill="#2a2a2a"/>
<path d="M162 975L167 980L172 975" stroke="#555" stroke-width="1.300" fill="none"/>
<rect x="187.5" y="963.500" width="124" height="25" rx="1.500" fill="#fff" stroke="#a8a8a8" stroke-width="1"/>
<rect x="201" y="976.300" width="74" height="1.400" fill="#2a2a2a"/>
<path d="M295 975L300 980L305 975" stroke="#555" stroke-width="1.300" fill="none"/>
<rect x="181.500" y="962" width="1" height="28" fill="#b4b4b4"/>
<rect x="319" y="957" width="1.400" height="37" fill="#8e8e8e"/>
<rect x="320.4" y="957" width="1" height="37" fill="#f8f8f8"/>
<rect x="330.3" y="958" width="8.400" height="35" fill="url(#gGrip)"/>
<rect x="338.7" y="958" width="1" height="35" fill="#8e8e8e"/>
<rect x="332.2" y="974.5" width="3.500" height="3.500" fill="#5a5a5a"/>
<rect x="338" y="960" width="135" height="33" fill="#f0f0f0"/>
<rect x="341.5" y="964" width="11" height="11" fill="#0000ff" stroke="#b8b8b8" stroke-width="1"/>
<rect x="341.5" y="979" width="11" height="11" fill="#ffd700" stroke="#b8b8b8" stroke-width="1"/>
<rect x="356.4" y="964" width="11" height="11" fill="#ff0000" stroke="#b8b8b8" stroke-width="1"/>
<rect x="356.4" y="979" width="11" height="11" fill="#ffff00" stroke="#b8b8b8" stroke-width="1"/>
<rect x="371.3" y="964" width="11" height="11" fill="#afeeee" stroke="#b8b8b8" stroke-width="1"/>
<rect x="371.3" y="979" width="11" height="11" fill="#696969" stroke="#b8b8b8" stroke-width="1"/>
<rect x="386.2" y="964" width="11" height="11" fill="#7fffd4" stroke="#b8b8b8" stroke-width="1"/>
<rect x="386.2" y="979" width="11" height="11" fill="#32cd32" stroke="#b8b8b8" stroke-width="1"/>
<rect x="401.1" y="964" width="11" height="11" fill="#7b7bc0" stroke="#b8b8b8" stroke-width="1"/>
<rect x="401.1" y="979" width="11" height="11" fill="#ffffe0" stroke="#b8b8b8" stroke-width="1"/>
<rect x="416.0" y="964" width="11" height="11" fill="#ffa54f" stroke="#b8b8b8" stroke-width="1"/>
<rect x="416.0" y="979" width="11" height="11" fill="#ff6820" stroke="#b8b8b8" stroke-width="1"/>
<rect x="430.9" y="964" width="11" height="11" fill="#ffc0cb" stroke="#b8b8b8" stroke-width="1"/>
<rect x="430.9" y="979" width="11" height="11" fill="#98fb98" stroke="#b8b8b8" stroke-width="1"/>
<rect x="445.8" y="964" width="11" height="11" fill="#e6e6fa" stroke="#b8b8b8" stroke-width="1"/>
<rect x="445.8" y="979" width="11" height="11" fill="#8b0000" stroke="#b8b8b8" stroke-width="1"/>
<rect x="355.400" y="963" width="13" height="13" fill="none" stroke="#fff" stroke-width="1" stroke-dasharray="1 1"/>
<path d="M461 975H468L464.500 979Z" fill="#111"/>
<rect x="480" y="957" width="1.400" height="37" fill="#8e8e8e"/>
<rect x="481.4" y="957" width="1" height="37" fill="#f8f8f8"/>
<rect x="491.3" y="958" width="8.400" height="35" fill="url(#gGrip)"/>
<rect x="499.7" y="958" width="1" height="35" fill="#8e8e8e"/>
<rect x="493.2" y="974.5" width="3.500" height="3.500" fill="#5a5a5a"/>
<rect x="505.5" y="970.500" width="19" height="14.500" rx="1" fill="#fcfcfc" stroke="#7a96b4" stroke-width="1.100"/>
<path d="M507.0 972h7" stroke="#9ab4d4" stroke-width="1.600" stroke-dasharray="1.500 0.800"/>
<path d="M508.5 982L513.0 978L515.0 979.500" stroke="#d02828" stroke-width="1.300" fill="none"/>
<text x="515.8" y="983.8" font-size="13.5" fill="#1a1a1a" font-family="Liberation Serif, serif">1</text>
<rect x="539.3" y="970.500" width="19" height="14.500" rx="1" fill="#fcfcfc" stroke="#7a96b4" stroke-width="1.100"/>
<path d="M540.8 972h7" stroke="#9ab4d4" stroke-width="1.600" stroke-dasharray="1.500 0.800"/>
<path d="M542.3 982L546.8 978L548.8 979.500" stroke="#d02828" stroke-width="1.300" fill="none"/>
<text x="549.6" y="983.8" font-size="13.5" fill="#1a1a1a" font-family="Liberation Serif, serif">2</text>
<rect x="573.1" y="970.500" width="19" height="14.500" rx="1" fill="#fcfcfc" stroke="#7a96b4" stroke-width="1.100"/>
<path d="M574.6 972h7" stroke="#9ab4d4" stroke-width="1.600" stroke-dasharray="1.500 0.800"/>
<path d="M576.1 982L580.6 978L582.6 979.500" stroke="#d02828" stroke-width="1.300" fill="none"/>
<text x="583.4" y="983.8" font-size="13.5" fill="#1a1a1a" font-family="Liberation Serif, serif">3</text>
<rect x="606.9" y="970.500" width="19" height="14.500" rx="1" fill="#fcfcfc" stroke="#7a96b4" stroke-width="1.100"/>
<path d="M608.4 972h7" stroke="#9ab4d4" stroke-width="1.600" stroke-dasharray="1.500 0.800"/>
<path d="M609.9 982L614.4 978L616.4 979.500" stroke="#d02828" stroke-width="1.300" fill="none"/>
<text x="617.2" y="983.8" font-size="13.5" fill="#1a1a1a" font-family="Liberation Serif, serif">4</text>
<rect x="640.7" y="970.500" width="19" height="14.500" rx="1" fill="#fcfcfc" stroke="#7a96b4" stroke-width="1.100"/>
<path d="M642.2 972h7" stroke="#9ab4d4" stroke-width="1.600" stroke-dasharray="1.500 0.800"/>
<path d="M643.7 982L648.2 978L650.2 979.500" stroke="#d02828" stroke-width="1.300" fill="none"/>
<text x="651.0" y="983.8" font-size="13.5" fill="#1a1a1a" font-family="Liberation Serif, serif">5</text>
<rect x="674.5" y="970.500" width="19" height="14.500" rx="1" fill="#fcfcfc" stroke="#7a96b4" stroke-width="1.100"/>
<path d="M676.0 972h7" stroke="#9ab4d4" stroke-width="1.600" stroke-dasharray="1.500 0.800"/>
<path d="M677.5 982L682.0 978L684.0 979.500" stroke="#d02828" stroke-width="1.300" fill="none"/>
<text x="684.8" y="983.8" font-size="13.5" fill="#1a1a1a" font-family="Liberation Serif, serif">6</text>
<rect x="709" y="957" width="1.400" height="37" fill="#8e8e8e"/>
<rect x="710.4" y="957" width="1" height="37" fill="#f8f8f8"/>
<rect x="0" y="995.800" width="1920" height="24.500" fill="#414141"/>
<text x="12.5" y="1015" font-size="15.5" fill="#f2f2f2" textLength="127" lengthAdjust="spacingAndGlyphs">For Help, press F1</text>
<text x="1580" y="1015" font-size="15.5" fill="#f2f2f2" textLength="78" lengthAdjust="spacingAndGlyphs">06/09/2022</text>
<text x="1684" y="1015" font-size="15.5" fill="#f2f2f2" textLength="38.5" lengthAdjust="spacingAndGlyphs">01:00</text>
<text x="1777" y="1015" font-size="15.5" fill="#f2f2f2" textLength="55.5" lengthAdjust="spacingAndGlyphs">342.024</text>
<rect x="1863.500" y="1000" width="25" height="18.500" fill="#fafafa"/>
<text x="1870.5" y="1015.5" font-size="16" fill="#14a014" textLength="10" lengthAdjust="spacingAndGlyphs" font-weight="bold">$</text>
<rect x="1894" y="1000" width="23" height="18.500" fill="#e8e8e8"/>
<rect x="1898" y="1003.500" width="11" height="8" fill="#4a7ac0" stroke="#2a4a80" stroke-width="1"/><rect x="1903" y="1007" width="11" height="8" fill="#6a9ae0" stroke="#2a4a80" stroke-width="1"/><rect x="1900" y="1015.500" width="12" height="1.500" fill="#555"/>
<defs><linearGradient id="gMs" x1="0" y1="0" x2="0" y2="1"><stop offset="0" stop-color="#8c8c8c"/><stop offset="0.3" stop-color="#5a5a5a"/><stop offset="0.62" stop-color="#060606"/><stop offset="1" stop-color="#000"/></linearGradient><linearGradient id="gMsB" x1="0" y1="0" x2="1" y2="0"><stop offset="0" stop-color="#f8a424"/><stop offset="1" stop-color="#f06c18"/></linearGradient><linearGradient id="gChat" x1="0" y1="0" x2="1" y2="1"><stop offset="0" stop-color="#9460c4"/><stop offset="1" stop-color="#4866dc"/></linearGradient></defs>
<rect x="0" y="1020" width="1920" height="60" fill="#211d27"/>
<circle cx="40.800" cy="1050" r="12.500" fill="url(#gSun)"/>
<text x="65.5" y="1046" font-size="15" fill="#ffffff" textLength="31.5" lengthAdjust="spacingAndGlyphs">24°C</text>
<text x="65.5" y="1066" font-size="15" fill="#d2d2d2" textLength="20" lengthAdjust="spacingAndGlyphs">Sol</text>
<rect x="506" y="1036" width="14" height="14" rx="1" fill="#5ad2fa"/>
<rect x="521" y="1036" width="14" height="14" rx="1" fill="#3cc0f4"/>
<rect x="506" y="1051" width="14" height="14" rx="1" fill="#36b6f0"/>
<rect x="521" y="1051" width="14" height="14" rx="1" fill="#1ea0e8"/>
<circle cx="578" cy="1048" r="10" fill="#3a3a40" stroke="#f0f0f0" stroke-width="3"/><path d="M570.500 1055.500L564.500 1062" stroke="#f0f0f0" stroke-width="3.400" stroke-linecap="round"/>
<path d="M630 1035.500A14 14 0 1 1 623 1061.500L617 1063.500L618.500 1057A14 14 0 0 1 630 1035.500Z" fill="url(#gChat)"/><rect x="622" y="1044" width="11" height="10" rx="2" fill="#fff"/><path d="M634 1048L638.500 1045V1053L634 1050Z" fill="#fff"/>
<rect x="685" y="1039.800" width="14" height="20.200" fill="#fff" stroke="#2b579a" stroke-width="1"/><path d="M690 1043H697M690 1046.500H697M690 1050H697M690 1053.500H697M690 1057H697" stroke="#2b579a" stroke-width="1.500"/><path d="M672.300 1038.300L688.300 1035.800V1064.200L672.300 1061.700Z" fill="#2b579a"/>
<text x="675" y="1055.5" font-size="12.5" fill="#fff" textLength="12" lengthAdjust="spacingAndGlyphs" font-weight="bold">W</text>
<rect x="682.5" y="1070.5" width="7" height="3" rx="1.5" fill="#8e8e8e"/>
<rect x="725.8000000000001" y="1035.600" width="29.800" height="29.200" rx="2.500" fill="url(#gMs)"/>
<path d="M733.0000000000001 1062.500L733.7 1050.600H736.7L736.0000000000001 1062.500ZM738.2 1062.500L739.2 1043.800H742.6L741.6 1062.500ZM743.3000000000001 1062.500L744.5000000000001 1036.900H748.1L746.9000000000001 1062.500Z" fill="url(#gMsB)"/>
<path d="M781.500 1040Q781.500 1037.500 784 1037.500H792L795 1040.500H808.500Q811 1040.500 811 1043V1046H781.500Z" fill="#e8a81c"/><rect x="781.500" y="1043" width="29.500" height="20" rx="2" fill="#fcd24a"/><rect x="786" y="1056" width="19.600" height="7" rx="1.800" fill="#1a80d8"/><rect x="789.500" y="1058.600" width="12.600" height="2" fill="#0a58a8"/>
<path d="M850 1050L837.4 1042.7A14.6 14.6 0 0 1 862.6 1042.7Z" fill="#e8412f"/>
<path d="M850 1050L862.6 1042.7A14.6 14.6 0 0 1 850.0 1064.6Z" fill="#fbc116"/>
<path d="M850 1050L850.0 1064.6A14.6 14.6 0 0 1 837.4 1042.7Z" fill="#2aa54a"/>
<circle cx="850" cy="1050" r="6.600" fill="#f4f4f4"/><circle cx="850" cy="1050" r="5.200" fill="#3f82f0"/>
<circle cx="862" cy="1038.800" r="10.600" fill="#211d27"/><circle cx="862" cy="1038.800" r="9.600" fill="#f26a10"/>
<text x="862" y="1043" font-size="10.5" fill="#ffe8d8" text-anchor="middle" font-weight="bold">N</text>
<rect x="847.0" y="1070.5" width="7" height="3" rx="1.5" fill="#8e8e8e"/>
<rect x="905" y="1039.800" width="14.700" height="20.200" fill="#fff" stroke="#d04424" stroke-width="1"/><circle cx="912" cy="1046" r="3.500" fill="none" stroke="#d04424" stroke-width="1.400"/><path d="M908 1053.500H917M908 1057H917" stroke="#d04424" stroke-width="1.500"/><path d="M892 1038.300L908 1035.800V1064.200L892 1061.700Z" fill="#d04424"/>
<text x="896.5" y="1055.5" font-size="13" fill="#fff" font-weight="bold">P</text>
<path d="M951.500 1054.500L948 1062.800H973.500L970 1054.500Z" fill="#f08c0c"/><path d="M951.500 1054.500L950.500 1057H971L970 1054.500Z" fill="#f8a838"/><path d="M958.900 1036.600Q960.700 1035 962.500 1036.600L968.900 1056.500Q960.700 1059 952.500 1056.500Z" fill="#f8860c"/><path d="M957.300 1041.500H964.100L965.600 1046.300Q960.700 1047.600 955.800 1046.300ZM954.400 1050.600Q960.700 1052 967 1050.600L968.500 1055.300Q960.700 1057.300 952.900 1055.300Z" fill="#e8e8e8"/><path d="M960.700 1035.500L963.500 1057.500L968.900 1056.500L962.500 1036.600Z" fill="#d86a00" opacity="0.350"/>
<defs><linearGradient id="gEdB" x1="0" y1="0" x2="0.6" y2="1"><stop offset="0" stop-color="#2c9cec"/><stop offset="1" stop-color="#0c58b0"/></linearGradient><linearGradient id="gEdG" x1="0" y1="0" x2="1" y2="0.3"><stop offset="0" stop-color="#2aa8e4"/><stop offset="0.5" stop-color="#34c4a8"/><stop offset="1" stop-color="#58d45c"/></linearGradient></defs>
<circle cx="1015.600" cy="1050" r="14.800" fill="url(#gEdB)"/><path d="M1002 1044Q1006 1035 1016.500 1035.200Q1028 1036 1030.300 1047Q1030.600 1053.600 1022 1053.600Q1019 1053 1020 1050.500Q1021.500 1048 1019.500 1045.500Q1012 1039 1002 1044Z" fill="url(#gEdG)"/><path d="M1006.500 1046Q1003 1055 1011 1061.500Q1018 1065 1025.500 1060Q1016 1062 1012.800 1054Q1012 1049 1016 1046.500Q1011 1044 1006.500 1046Z" fill="#0c4a9c"/><path d="M1020.500 1054Q1026 1054.800 1030.400 1051Q1030.800 1054.500 1028.500 1058Q1023 1058.500 1020.500 1054Z" fill="#211d27"/>
<rect x="1069" y="1039.800" width="14.700" height="20.200" fill="#fff" stroke="#3a5aac" stroke-width="1"/><rect x="1076" y="1042" width="5" height="5" fill="none" stroke="#3a5aac" stroke-width="1.200" transform="rotate(45 1078.500 1044.500)"/><rect x="1073.500" y="1052" width="6" height="5" fill="none" stroke="#3a5aac" stroke-width="1.200"/><path d="M1057 1038.300L1073.200 1035.800V1064.200L1057 1061.700Z" fill="#3a54a8"/>
<text x="1061.5" y="1055.5" font-size="13" fill="#fff" font-weight="bold">V</text>
<rect x="1124" y="1039.800" width="14.700" height="20.200" fill="#fff" stroke="#1e7044" stroke-width="1"/><path d="M1128 1043H1137M1128 1047H1137M1128 1051H1137M1128 1055H1137M1128 1059H1137M1132.500 1041V1060" stroke="#1e7044" stroke-width="1.300"/><path d="M1112.200 1038.300L1128.300 1035.800V1064.200L1112.200 1061.700Z" fill="#1e7044"/>
<text x="1116" y="1055.5" font-size="13" fill="#fff" font-weight="bold">X</text>
<rect x="1122.0" y="1070.5" width="7" height="3" rx="1.5" fill="#8e8e8e"/>
<path d="M1180.5 1050L1167.9 1042.7A14.6 14.6 0 0 1 1193.1 1042.7Z" fill="#e8412f"/>
<path d="M1180.5 1050L1193.1 1042.7A14.6 14.6 0 0 1 1180.5 1064.6Z" fill="#fbc116"/>
<path d="M1180.5 1050L1180.5 1064.6A14.6 14.6 0 0 1 1167.9 1042.7Z" fill="#2aa54a"/>
<circle cx="1180.5" cy="1050" r="6.600" fill="#f4f4f4"/><circle cx="1180.5" cy="1050" r="5.200" fill="#3f82f0"/>
<rect x="1224.500" y="1035.500" width="22" height="29" rx="2" fill="#8e9aa6" stroke="#6a7682" stroke-width="1"/><rect x="1227" y="1038.500" width="17" height="5.500" fill="#4cc8f4"/>
<rect x="1227" y="1046.5" width="4.800" height="4.600" fill="#dce2e8"/>
<rect x="1233" y="1046.5" width="4.800" height="4.600" fill="#dce2e8"/>
<rect x="1239" y="1046.5" width="4.800" height="4.600" fill="#dce2e8"/>
<rect x="1227" y="1052.3" width="4.800" height="4.600" fill="#dce2e8"/>
<rect x="1233" y="1052.3" width="4.800" height="4.600" fill="#dce2e8"/>
<rect x="1227" y="1058.1" width="4.800" height="4.600" fill="#dce2e8"/>
<rect x="1233" y="1058.1" width="4.800" height="4.600" fill="#dce2e8"/>
<rect x="1239" y="1052.300" width="4.800" height="10.400" fill="#164c90"/>
<rect x="1232.5" y="1070.5" width="7" height="3" rx="1.5" fill="#8e8e8e"/>
<rect x="1276" y="1035" width="30" height="30" fill="#0a8080"/><path d="M1281 1060.500H1301V1057.500H1281ZM1282.500 1056.500H1299.500L1298 1052.500H1284ZM1284 1051.500Q1277 1044.500 1283 1041.500Q1288 1040.500 1289.500 1045.500V1041.500H1292.500V1045.500Q1294 1040.500 1299 1041.500Q1305 1044.500 1298 1051.500Z" fill="#f8f8f8" stroke="#111" stroke-width="0.800"/><path d="M1291 1036.500V1041.500M1289 1038.500H1293" stroke="#111" stroke-width="1.400"/>
<rect x="1320.500" y="1025" width="50" height="50" rx="4.500" fill="#312e39"/><rect x="1320.500" y="1025" width="50" height="50" rx="4.500" fill="none" stroke="#3d3a46" stroke-width="1"/>
<rect x="1330.6" y="1035.600" width="29.800" height="29.200" rx="2.500" fill="url(#gMs)"/>
<path d="M1337.8 1062.500L1338.5 1050.600H1341.5L1340.8 1062.500ZM1343.0 1062.500L1344.0 1043.800H1347.3999999999999L1346.3999999999999 1062.500ZM1348.1 1062.500L1349.3 1036.900H1352.8999999999999L1351.6999999999998 1062.500Z" fill="url(#gMsB)"/>
<rect x="1336" y="1070" width="20" height="3.600" rx="1.800" fill="#4cc2ff"/>
<rect x="1386.500" y="1035.500" width="28.500" height="28.500" rx="4.500" fill="#211a22" stroke="#86172a" stroke-width="1.400"/>
<text x="1389.5" y="1059" font-size="14" fill="#a81c30" textLength="23" lengthAdjust="spacingAndGlyphs">Pro</text>
<path d="M1401 1041.500H1407M1404 1039.500L1407 1041.500L1404 1043.500" stroke="#a81c30" stroke-width="1" fill="none"/>
<rect x="1397.5" y="1070.5" width="7" height="3" rx="1.5" fill="#8e8e8e"/>
<path d="M1632.500 1054L1640 1046.500L1647.500 1054" stroke="#f0f0f0" stroke-width="1.400" fill="none"/>
<path d="M1662 1055Q1659.500 1052 1662.500 1049.500Q1663 1045 1667.500 1045.500Q1671 1042.500 1674 1046Q1677.500 1046.500 1677 1050.500L1676 1055Z" fill="#c8c8c8"/><path d="M1667 1055Q1664 1049 1670 1046.500Q1675 1045 1677 1050V1055Z" fill="#9a9a9a"/><circle cx="1674.500" cy="1054.500" r="5" fill="#e02030"/><path d="M1672.500 1052.500L1676.500 1056.500M1676.500 1052.500L1672.500 1056.500" stroke="#fff" stroke-width="1.300"/>
<path d="M1695.500 1047.500Q1705 1038.500 1714.500 1047.500M1698.500 1050.500Q1705 1044.500 1711.500 1050.500M1701.500 1053.500Q1705 1050.500 1708.500 1053.500" stroke="#f4f4f4" stroke-width="1.600" fill="none"/><circle cx="1705" cy="1056" r="1.500" fill="#f4f4f4"/>
<path d="M1725.500 1047.500H1729L1733.500 1043.500V1056.500L1729 1052.500H1725.500Z" fill="none" stroke="#f4f4f4" stroke-width="1.300" stroke-linejoin="round"/><path d="M1736 1047.500Q1738 1050 1736 1052.500M1738.500 1045.500Q1742 1050 1738.500 1054.500" stroke="#f4f4f4" stroke-width="1.300" fill="none"/><path d="M1741 1043Q1746.500 1050 1741 1057" stroke="#7a7a7a" stroke-width="1.300" fill="none"/>
<rect x="1760.500" y="1045.500" width="12" height="9.500" rx="1.500" fill="none" stroke="#f4f4f4" stroke-width="1.500"/><rect x="1773.200" y="1048" width="2" height="4.500" fill="#f4f4f4"/><rect x="1762" y="1047" width="4" height="6.500" fill="#f4f4f4"/><path d="M1756 1041.500V1044.500M1759 1041.500V1044.500M1755 1044.500H1760V1048Q1757.500 1050 1757.500 1055" stroke="#f4f4f4" stroke-width="1.400" fill="none"/>
<text x="1865.5" y="1044.7" font-size="14.5" fill="#ffffff" text-anchor="end" textLength="32.5" lengthAdjust="spacingAndGlyphs">16:57</text>
<text x="1865.5" y="1064.7" font-size="14.5" fill="#ffffff" text-anchor="end" textLength="71.5" lengthAdjust="spacingAndGlyphs">17/10/2022</text>
<circle cx="1885.800" cy="1050" r="10" fill="#4cc2ff"/>
<text x="1885.8" y="1055" font-size="13.5" fill="#101010" text-anchor="middle">1</text>
</svg></body></html>
